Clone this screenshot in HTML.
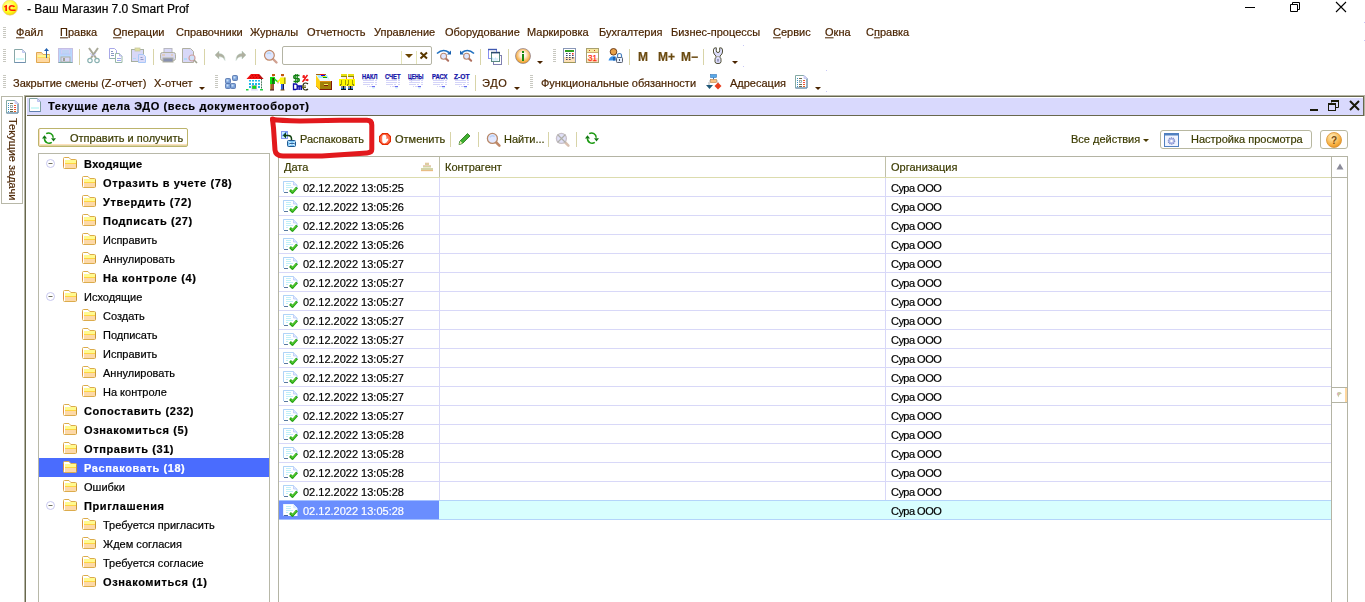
<!DOCTYPE html><html><head><meta charset="utf-8"><style>
*{margin:0;padding:0;box-sizing:border-box}
html,body{width:1365px;height:602px;overflow:hidden;background:#fff;position:relative;font-family:"Liberation Sans",sans-serif}
.a{position:absolute}
.t{position:absolute;height:0;white-space:pre;line-height:0;will-change:transform;-webkit-text-stroke:0.2px currentColor}
.t span{position:absolute;left:0;bottom:0;line-height:normal;display:block;transform:translateY(0.21em)}
svg{position:absolute;overflow:visible}
</style></head><body>
<svg style="left:0;top:0" width="20" height="17" viewBox="0 0 20 17">
<defs><radialGradient id="g1c" cx="0.4" cy="0.35" r="0.7"><stop offset="0" stop-color="#ffffb0"/><stop offset="0.6" stop-color="#ffff20"/><stop offset="1" stop-color="#f0d000"/></radialGradient></defs>
<circle cx="10" cy="7.6" r="7.6" fill="url(#g1c)" stroke="#e8c890" stroke-width="0.6"/>
<path d="M4.2 6.2 L6.2 5 L7 5 L7 11 L5.3 11 L5.3 7 L4.2 7.4 Z" fill="#ff2000"/>
<path d="M15.2 6.6 Q14.6 5 11.8 5 Q8.6 5 8.6 8 Q8.6 11 11.8 11 L15.6 11 L15.6 9.6 L11.8 9.6 Q10.2 9.6 10.2 8 Q10.2 6.4 11.8 6.4 Q13.2 6.4 13.6 7.2 Z" fill="#ff2000"/>
</svg>
<div class="t" style="left:27px;top:13px;font-size:12px;color:#000;font-weight:normal;"><span>- Ваш Магазин 7.0 Smart Prof</span></div>
<div class="a" style="left:1245px;top:7px;width:10px;height:1px;background:#000"></div>
<svg style="left:1288px;top:0" width="16" height="14" viewBox="0 0 16 14"><path d="M2.5 4.5h7v7h-7z M4.5 4.5v-2h7v7h-2" fill="none" stroke="#000" stroke-width="1"/></svg>
<svg style="left:1335px;top:1px" width="12" height="12" viewBox="0 0 12 12"><path d="M1 1L11 11M11 1L1 11" stroke="#000" stroke-width="1.1"/></svg>
<div class="a" style="left:3px;top:27px;width:3px;height:1px;background:#c8c8c0"></div><div class="a" style="left:3px;top:29px;width:3px;height:1px;background:#c8c8c0"></div><div class="a" style="left:3px;top:31px;width:3px;height:1px;background:#c8c8c0"></div><div class="a" style="left:3px;top:33px;width:3px;height:1px;background:#c8c8c0"></div><div class="a" style="left:3px;top:35px;width:3px;height:1px;background:#c8c8c0"></div><div class="a" style="left:3px;top:37px;width:3px;height:1px;background:#c8c8c0"></div>
<div class="t" style="left:16px;top:36px;font-size:11px;color:#4a2400;font-weight:normal;"><span><u>Ф</u>айл</span></div>
<div class="t" style="left:60px;top:36px;font-size:11px;color:#4a2400;font-weight:normal;"><span><u>П</u>равка</span></div>
<div class="t" style="left:113px;top:36px;font-size:11px;color:#4a2400;font-weight:normal;"><span><u>О</u>перации</span></div>
<div class="t" style="left:176px;top:36px;font-size:11px;color:#4a2400;font-weight:normal;"><span>Справочники</span></div>
<div class="t" style="left:250px;top:36px;font-size:11px;color:#4a2400;font-weight:normal;"><span>Журналы</span></div>
<div class="t" style="left:307px;top:36px;font-size:11px;color:#4a2400;font-weight:normal;"><span>Отчетность</span></div>
<div class="t" style="left:374px;top:36px;font-size:11px;color:#4a2400;font-weight:normal;"><span>Управление</span></div>
<div class="t" style="left:445px;top:36px;font-size:11px;color:#4a2400;font-weight:normal;"><span>Оборудование</span></div>
<div class="t" style="left:527px;top:36px;font-size:11px;color:#4a2400;font-weight:normal;"><span>Маркировка</span></div>
<div class="t" style="left:599px;top:36px;font-size:11px;color:#4a2400;font-weight:normal;"><span>Бухгалтерия</span></div>
<div class="t" style="left:671px;top:36px;font-size:11px;color:#4a2400;font-weight:normal;"><span>Бизнес-процессы</span></div>
<div class="t" style="left:773px;top:36px;font-size:11px;color:#4a2400;font-weight:normal;"><span><u>С</u>ервис</span></div>
<div class="t" style="left:825px;top:36px;font-size:11px;color:#4a2400;font-weight:normal;"><span><u>О</u>кна</span></div>
<div class="t" style="left:866px;top:36px;font-size:11px;color:#4a2400;font-weight:normal;"><span>С<u>п</u>равка</span></div>
<div class="a" style="left:3px;top:49px;width:3px;height:1px;background:#c8c8c0"></div><div class="a" style="left:3px;top:51px;width:3px;height:1px;background:#c8c8c0"></div><div class="a" style="left:3px;top:53px;width:3px;height:1px;background:#c8c8c0"></div><div class="a" style="left:3px;top:55px;width:3px;height:1px;background:#c8c8c0"></div><div class="a" style="left:3px;top:57px;width:3px;height:1px;background:#c8c8c0"></div><div class="a" style="left:3px;top:59px;width:3px;height:1px;background:#c8c8c0"></div><div class="a" style="left:3px;top:61px;width:3px;height:1px;background:#c8c8c0"></div>
<svg style="left:13px;top:48px" width="16" height="16" viewBox="0 0 16 16"><path d="M1.5 1.5h8l3 3v10h-11z" fill="#fff" stroke="#88a8a8"/><path d="M1.5 14.5h11" stroke="#7090b0"/><path d="M9.5 1.5v3h3" fill="#d8d8f8" stroke="#c0c8f0"/><rect x="3" y="10" width="8" height="2" fill="#d0f8f8"/></svg>
<svg style="left:36px;top:47px" width="16" height="17" viewBox="0 0 16 17"><path d="M0.5 5.5h5l1.5 2h6.5v8h-13z" fill="#ffd8a0" stroke="#e0a850"/><rect x="1.5" y="8" width="12" height="3" fill="#fff890"/><rect x="1.5" y="10" width="12" height="1" fill="#ffd860"/><path d="M10.5 11V2" stroke="#3060a0" stroke-width="1"/><path d="M8 4l2.5-3 2.5 3z" fill="#2060b0"/></svg>
<svg style="left:58px;top:48px" width="16" height="16" viewBox="0 0 16 16"><rect x="0.5" y="0.5" width="14" height="14" fill="#b8d8ff" stroke="#c8c0e0"/><rect x="3" y="1" width="9" height="5" fill="#d8d8f8" stroke="#c0b8f0" stroke-width="0.6"/><path d="M4 3h7M4 5h7" stroke="#a8d0f0"/><rect x="3" y="9" width="9" height="5" fill="#d8d8f8" stroke="#b0b0a0"/><rect x="5" y="10" width="2" height="3" fill="#a0a090"/><path d="M0.5 14.5h14" stroke="#80a8a0"/></svg>
<div class="a" style="left:79px;top:49px;width:1px;height:16px;background:#d8d4a8"></div>
<svg style="left:87px;top:47px" width="13" height="17" viewBox="0 0 13 17"><path d="M2 1l7 10M11 1L4 11" stroke="#a8a898" stroke-width="2"/><path d="M3 6l2.5 3M9 6L6.5 9" stroke="#c8c8f8" stroke-width="1"/><circle cx="3" cy="13.5" r="2.2" fill="none" stroke="#88b0b0" stroke-width="1.2"/><circle cx="10" cy="13.5" r="2.2" fill="none" stroke="#88b0b0" stroke-width="1.2"/></svg>
<svg style="left:108px;top:48px" width="16" height="16" viewBox="0 0 16 16"><path d="M1.5 0.5h5l2 2v8h-7z" fill="#fff" stroke="#a8a8e8"/><path d="M1.5 10.5h7" stroke="#90b0a8"/><path d="M3 3.5h2M3 5.5h3M3 7.5h3" stroke="#8898c0"/><path d="M7.5 5.5h4l2.5 2.5v6.5h-6.5z" fill="#fff" stroke="#98b8a8"/><path d="M11.5 5.5v2.5h2.5" fill="#e0e0ff" stroke="#a8a8e8" stroke-width="0.8"/><path d="M9 10.5h4M9 12.5h4" stroke="#a0a8f0"/></svg>
<svg style="left:131px;top:47px" width="17" height="17" viewBox="0 0 17 17"><rect x="0.5" y="2.5" width="12" height="12" fill="#d8d8f8" stroke="#a8b0a0"/><rect x="4" y="1" width="5" height="3" fill="#e0e0a0" stroke="#c8c8a0" stroke-width="0.8"/><path d="M7.5 7.5h5l2 2v6h-7z" fill="#dcdcf8" stroke="#a8c8f8"/><rect x="2" y="11" width="3" height="1" fill="#b0d8f8"/><path d="M9.5 12.5h3M9.5 10.5h2" stroke="#9098c8"/></svg>
<div class="a" style="left:153px;top:49px;width:1px;height:16px;background:#d8d4a8"></div>
<svg style="left:160px;top:48px" width="16" height="16" viewBox="0 0 16 16"><rect x="4" y="0.5" width="8" height="5" fill="#d8d8f8" stroke="#b8b8c0"/><rect x="0.5" y="4.5" width="15" height="8" rx="2" fill="#d8d8f0" stroke="#b0b0a0"/><rect x="3" y="10" width="10" height="4" fill="#8890b0" stroke="#b0b0a0"/><path d="M2 7h3M11 7h2" stroke="#e8c090"/></svg>
<svg style="left:182px;top:48px" width="16" height="16" viewBox="0 0 16 16"><path d="M0.5 0.5h8l3 3v11h-11z" fill="#d8d8f8" stroke="#b0b0a0"/><rect x="2" y="10" width="3" height="2" fill="#b0d8f8"/><circle cx="10" cy="10" r="3" fill="#d0e0f8" stroke="#d0a0a0" stroke-width="1.2"/><path d="M12 12l3 3" stroke="#a0a090" stroke-width="1.6"/></svg>
<div class="a" style="left:204px;top:49px;width:1px;height:16px;background:#d8d4a8"></div>
<svg style="left:214px;top:50px" width="12" height="11" viewBox="0 0 12 11"><path d="M1 5L5 1v2.5q6 0 6 7q-1.5-4-6-4V9z" fill="#b0b0a0" stroke="#a8c8b8" stroke-width="0.4"/></svg>
<svg style="left:235px;top:50px" width="12" height="11" viewBox="0 0 12 11"><path d="M11 5L7 1v2.5q-6 0-6 7q1.5-4 6-4V9z" fill="#b0b0a0" stroke="#a8c8b8" stroke-width="0.4"/></svg>
<div class="a" style="left:255px;top:49px;width:1px;height:16px;background:#d8d4a8"></div>
<svg style="left:263px;top:49px" width="16" height="16" viewBox="0 0 16 16"><path d="M9.5 9.5l4 4" stroke="#d0a090" stroke-width="2.4" stroke-linecap="round"/><circle cx="6.4" cy="6.3" r="4.9" fill="#dfe6ff" stroke="#c08868" stroke-width="1.2"/><path d="M4 5q2-2 4 0" stroke="#b8d8f8" stroke-width="1.5" fill="none"/></svg>
<div class="a" style="left:282px;top:46px;width:150px;height:19px;border:1px solid #b4b4a4;border-radius:2px;background:#fff"></div>
<div class="a" style="left:401px;top:51px;width:1px;height:13px;background:#e4e4b8"></div>
<div class="a" style="left:416px;top:51px;width:1px;height:13px;background:#e4e4b8"></div>
<svg style="left:405px;top:54px" width="8" height="4" viewBox="0 0 8 4"><path d="M0 0h8l-4 4z" fill="#6a4400"/></svg>
<svg style="left:419px;top:51px" width="10" height="9" viewBox="0 0 10 9"><path d="M1.5 1.5l6.5 6M8 1.5l-6.5 6" stroke="#5a3800" stroke-width="2"/></svg>
<svg style="left:436px;top:48px" width="16" height="16" viewBox="0 0 16 16"><path d="M1 5.5Q7 0 13 4.5" stroke="#2070c0" stroke-width="1.6" fill="none"/><path d="M15 2.5v4h-4z" fill="#1860b0"/><path d="M9.6 10.2l2.6 2.6" stroke="#b07060" stroke-width="2" stroke-linecap="round"/><circle cx="7.6" cy="8.2" r="3" fill="#dfe6ff" stroke="#b88870" stroke-width="1.1"/></svg>
<svg style="left:459px;top:48px" width="16" height="16" viewBox="0 0 16 16"><g transform="translate(16,0) scale(-1,1)"><path d="M1 5.5Q7 0 13 4.5" stroke="#2070c0" stroke-width="1.6" fill="none"/><path d="M15 2.5v4h-4z" fill="#1860b0"/></g><path d="M9.6 10.2l2.6 2.6" stroke="#b07060" stroke-width="2" stroke-linecap="round"/><circle cx="7.6" cy="8.2" r="3" fill="#dfe6ff" stroke="#b88870" stroke-width="1.1"/></svg>
<div class="a" style="left:480px;top:49px;width:1px;height:16px;background:#d8d4a8"></div>
<svg style="left:487px;top:48px" width="16" height="16" viewBox="0 0 16 16"><rect x="1.5" y="1.5" width="8" height="9" fill="#fff" stroke="#8890f0"/><path d="M1 1.5h9" stroke="#4058b0" stroke-width="1.4"/><rect x="6.5" y="7.5" width="8" height="9" fill="#fff" stroke="#8080b0"/><rect x="4.5" y="4.5" width="8" height="9" fill="#fff" stroke="#5a8a80"/><path d="M4 4.6h9" stroke="#2a4a70" stroke-width="1.6"/><path d="M5.5 9.5v2M7 10v1.5M8.5 9.5v2M10 10v1.5M5 12h6" stroke="#b8e0f8" stroke-width="0.8"/></svg>
<div class="a" style="left:508px;top:49px;width:1px;height:16px;background:#d8d4a8"></div>
<svg style="left:515px;top:48px" width="16" height="16" viewBox="0 0 16 16"><defs><radialGradient id="gi" cx="0.5" cy="0.42" r="0.55"><stop offset="0" stop-color="#ffffff"/><stop offset="0.35" stop-color="#fff0e0"/><stop offset="0.7" stop-color="#f8c070"/><stop offset="1" stop-color="#f0a020"/></radialGradient></defs><circle cx="8" cy="8" r="7.5" fill="url(#gi)" stroke="#8a7a8a" stroke-width="0.7"/><rect x="7" y="6" width="2" height="7" fill="#1a8a10"/><rect x="7" y="3" width="2" height="2" fill="#1a8a10"/></svg>
<svg style="left:537px;top:61px" width="6" height="3" viewBox="0 0 6 3"><path d="M0 0h6l-3 3z" fill="#4a2400"/></svg>
<div class="a" style="left:553px;top:49px;width:3px;height:1px;background:#c8c8c0"></div><div class="a" style="left:553px;top:51px;width:3px;height:1px;background:#c8c8c0"></div><div class="a" style="left:553px;top:53px;width:3px;height:1px;background:#c8c8c0"></div><div class="a" style="left:553px;top:55px;width:3px;height:1px;background:#c8c8c0"></div><div class="a" style="left:553px;top:57px;width:3px;height:1px;background:#c8c8c0"></div><div class="a" style="left:553px;top:59px;width:3px;height:1px;background:#c8c8c0"></div><div class="a" style="left:553px;top:61px;width:3px;height:1px;background:#c8c8c0"></div>
<svg style="left:563px;top:48px" width="14" height="16" viewBox="0 0 14 16"><rect x="0.5" y="0.5" width="12" height="14" fill="#fff" stroke="#8a98b8"/><rect x="1" y="9" width="11" height="5" fill="#fde0b8"/><path d="M0.5 14.5h12" stroke="#a09858"/><rect x="2" y="2" width="9" height="2" fill="#30a020"/><g fill="#404868"><rect x="3" y="5" width="1.6" height="1"/><rect x="6" y="5" width="1.6" height="1"/><rect x="3" y="7" width="1.6" height="1"/><rect x="6" y="7" width="1.6" height="1"/><rect x="9" y="7" width="1.6" height="1"/><rect x="3" y="9" width="1.6" height="1"/><rect x="6" y="9" width="1.6" height="1"/><rect x="9" y="9" width="1.6" height="1.5"/><rect x="3" y="11" width="1.6" height="1"/><rect x="6" y="11" width="1.6" height="1"/></g><rect x="9" y="5" width="1.6" height="1.5" fill="#f03020"/></svg>
<svg style="left:586px;top:48px" width="14" height="16" viewBox="0 0 14 16"><rect x="0.5" y="0.5" width="12" height="14" fill="#fff" stroke="#a8a070"/><rect x="1" y="1" width="11" height="3" fill="#f8e8a0"/><path d="M1 4.5h11" stroke="#c8b070"/><g fill="#c04020"><rect x="3" y="2" width="1" height="1"/><rect x="8" y="2" width="1" height="1"/></g><rect x="1" y="10" width="11" height="4" fill="#fde0c0"/><text x="2" y="13.3" font-family="Liberation Sans" font-size="9.5" fill="#ff3010" stroke="#ff3010" stroke-width="0.25" textLength="9" lengthAdjust="spacingAndGlyphs">31</text></svg>
<svg style="left:608px;top:48px" width="17" height="16" viewBox="0 0 17 16"><circle cx="5.5" cy="3.8" r="3.3" fill="#e8a048" stroke="#603010" stroke-width="0.9"/><path d="M0.5 12.5Q1.5 8.5 5 8.3L7.5 8.3V12.5z" fill="#3a90e8"/><rect x="5" y="9" width="2.5" height="3.5" fill="#1a60b0"/><rect x="8.5" y="9.5" width="6" height="5" rx="0.8" fill="#e8f0ff" stroke="#5a6070"/><path d="M9.5 9.5V7.5q0-2 2-2t2 2v2" fill="none" stroke="#4a80c0" stroke-width="1.2"/><rect x="11" y="11" width="1" height="2" fill="#4a6070"/></svg>
<div class="a" style="left:629px;top:49px;width:1px;height:16px;background:#d8d4a8"></div>
<div class="t" style="left:638px;top:61px;font-size:12px;color:#6a4a10;font-weight:bold;"><span>M</span></div>
<div class="t" style="left:658px;top:61px;font-size:12px;color:#6a4a10;font-weight:bold;"><span>M+</span></div>
<div class="t" style="left:681px;top:61px;font-size:12px;color:#6a4a10;font-weight:bold;"><span>M−</span></div>
<div class="a" style="left:703px;top:49px;width:1px;height:16px;background:#d8d4a8"></div>
<svg style="left:712px;top:47px" width="12" height="18" viewBox="0 0 12 18"><path d="M1.5 3Q1.5 0.8 3.5 0.8H4.3V3.5Q4.3 5.6 6 5.6Q7.7 5.6 7.7 3.5V0.8H8.5Q10.5 0.8 10.5 3V5Q10.5 7 8 9V10.3Q9 11 9 12.5V14.8Q9 16.6 6 16.6Q3 16.6 3 14.8V12.5Q3 11 4 10.3V9Q1.5 7 1.5 5Z" fill="#dcdcfa" stroke="#3e3e20" stroke-width="0.9"/><path d="M2.5 2.5v2.5" stroke="#fff" stroke-width="1"/><rect x="5.3" y="12" width="1.4" height="2.6" fill="#8080a8"/><rect x="5.3" y="9" width="1.4" height="1" fill="#a0a080"/></svg>
<div class="a" style="left:743px;top:45px;width:1px;height:1px;background:#c8c8f8"></div>
<div class="a" style="left:743px;top:66px;width:1px;height:1px;background:#c8c8f8"></div>
<div class="a" style="left:1364px;top:22px;width:1px;height:1px;background:#c8c8f8"></div>
<div class="a" style="left:1364px;top:40px;width:1px;height:1px;background:#c8c8f8"></div>
<svg style="left:732px;top:61px" width="6" height="3" viewBox="0 0 6 3"><path d="M0 0h6l-3 3z" fill="#4a2400"/></svg>
<div class="a" style="left:3px;top:75px;width:3px;height:1px;background:#c8c8c0"></div><div class="a" style="left:3px;top:77px;width:3px;height:1px;background:#c8c8c0"></div><div class="a" style="left:3px;top:79px;width:3px;height:1px;background:#c8c8c0"></div><div class="a" style="left:3px;top:81px;width:3px;height:1px;background:#c8c8c0"></div><div class="a" style="left:3px;top:83px;width:3px;height:1px;background:#c8c8c0"></div><div class="a" style="left:3px;top:85px;width:3px;height:1px;background:#c8c8c0"></div><div class="a" style="left:3px;top:87px;width:3px;height:1px;background:#c8c8c0"></div>
<div class="t" style="left:13px;top:87px;font-size:11px;color:#4a2400;font-weight:normal;"><span>Закрытие смены (Z-отчет)</span></div>
<div class="t" style="left:154px;top:87px;font-size:11px;color:#4a2400;font-weight:normal;"><span>X-отчет</span></div>
<svg style="left:199px;top:87px" width="6" height="3" viewBox="0 0 6 3"><path d="M0 0h6l-3 3z" fill="#4a2400"/></svg>
<div class="a" style="left:215px;top:75px;width:3px;height:1px;background:#c8c8c0"></div><div class="a" style="left:215px;top:77px;width:3px;height:1px;background:#c8c8c0"></div><div class="a" style="left:215px;top:79px;width:3px;height:1px;background:#c8c8c0"></div><div class="a" style="left:215px;top:81px;width:3px;height:1px;background:#c8c8c0"></div><div class="a" style="left:215px;top:83px;width:3px;height:1px;background:#c8c8c0"></div><div class="a" style="left:215px;top:85px;width:3px;height:1px;background:#c8c8c0"></div><div class="a" style="left:215px;top:87px;width:3px;height:1px;background:#c8c8c0"></div>
<svg style="left:225px;top:75px" width="14" height="15" viewBox="0 0 14 15"><g fill="#7aa0d8" stroke="#4f6fa8" stroke-width="0.8"><rect x="0.5" y="3.5" width="5" height="5" rx="1"/><rect x="0.5" y="8.5" width="5" height="5" rx="1"/><rect x="5.5" y="8.5" width="5" height="5" rx="1"/><rect x="7.5" y="0.5" width="5" height="5" rx="1"/></g><g fill="#c8e0f8"><rect x="1.5" y="4.5" width="2" height="2"/><rect x="1.5" y="9.5" width="2" height="2"/><rect x="6.5" y="9.5" width="2" height="2"/><rect x="8.5" y="1.5" width="2" height="2"/></g></svg>
<svg style="left:246px;top:73px" width="18" height="18" viewBox="0 0 18 18"><path d="M5 1h8l4.5 5H0.5z" fill="#f01010"/><path d="M13 1l4.5 5H14z" fill="#901010" opacity="0.6"/><g fill="#900000" opacity="0.55"><rect x="6" y="2" width="1" height="1"/><rect x="9" y="2" width="1" height="1"/><rect x="12" y="2" width="1" height="1"/><rect x="4" y="4" width="1" height="1"/><rect x="7" y="4" width="1" height="1"/><rect x="10" y="4" width="1" height="1"/><rect x="13" y="4" width="1" height="1"/></g><rect x="2" y="6" width="13" height="10" fill="#fff"/><g fill="#20b8e8"><rect x="3" y="7" width="2" height="1.5"/><rect x="6" y="7" width="2" height="1.5"/><rect x="9" y="7" width="2" height="1.5"/><rect x="12" y="7" width="2" height="1.5"/><rect x="3" y="10" width="2" height="2"/><rect x="6" y="10" width="2" height="2"/><rect x="9" y="10" width="2" height="2"/><rect x="12" y="10" width="2" height="2"/><rect x="3" y="13" width="2" height="2"/><rect x="12" y="13" width="2" height="2"/></g><rect x="6" y="12.5" width="4.5" height="3.5" fill="#10e010" stroke="#a090c0" stroke-width="0.6"/><path d="M15.5 6v10" stroke="#306848" stroke-width="1" stroke-dasharray="1 0.6"/><rect x="0" y="16" width="2.5" height="1.5" fill="#20d040"/><rect x="14" y="16" width="3" height="1.5" fill="#20d040"/><rect x="5" y="16.5" width="7" height="1" fill="#d8d8f8"/></svg>
<svg style="left:269px;top:73px" width="18" height="18" viewBox="0 0 18 18"><rect x="3" y="1" width="3" height="2" fill="#c05810"/><rect x="3" y="3" width="2" height="1.5" fill="#f8c8d0"/><rect x="1" y="4" width="5" height="7" fill="#10e010"/><rect x="3" y="5" width="2.5" height="6" fill="#108010"/><rect x="4" y="5" width="1" height="2.5" fill="#402010"/><path d="M5.5 6l4 3.5" stroke="#10e010" stroke-width="1.5"/><rect x="1.3" y="11" width="2" height="6" fill="#a07010"/><rect x="3.3" y="11" width="1.5" height="6" fill="#902010"/><rect x="1" y="16.5" width="4" height="1" fill="#401010"/><rect x="12" y="1" width="3" height="2" fill="#c05810"/><rect x="12.5" y="3" width="2" height="1.5" fill="#f8c8d0"/><rect x="11" y="4.5" width="5.5" height="6.5" fill="#fff810"/><rect x="15" y="4.5" width="1.5" height="6.5" fill="#a8a010"/><path d="M11.5 6l-3 3.5" stroke="#fff810" stroke-width="1.5"/><rect x="8" y="9.5" width="2" height="1" fill="#f8b0c0"/><rect x="12" y="11" width="1.5" height="6" fill="#2060f0"/><rect x="13.5" y="11" width="1.5" height="6" fill="#101860"/><rect x="11.5" y="16.5" width="4" height="1" fill="#805010"/></svg>
<svg style="left:293px;top:74px" width="16" height="16" viewBox="0 0 16 16"><path d="M6.5 1.5H2Q0.8 1.5 0.8 3Q0.8 4.5 2.2 4.5H4.8Q6.2 4.5 6.2 6Q6.2 7.5 5 7.5H0.5" stroke="#108010" stroke-width="1.6" fill="none"/><path d="M2.7 0v9M4.3 0v9" stroke="#108010" stroke-width="1"/><path d="M9.5 8l5-7" stroke="#f01010" stroke-width="1.4"/><path d="M9.6 2.2l1.4-1 1 1-1 1z M13 6l1.4-1 1 1-1 1z" fill="#f01010" stroke="#f01010" stroke-width="0.8"/><path d="M9.5 3.5h3M11 6h4" stroke="#f01010" stroke-width="0.9"/><path d="M0.5 10h2.2q1.5 0 1.5 1.5v2.5q0 1.5-1.5 1.5H0.5z" fill="none" stroke="#0a0aa8" stroke-width="1.3"/><path d="M5 16v-4h3.5v4M6.8 12v4" stroke="#0a0aa8" stroke-width="1.3" fill="none"/><path d="M15 10q-1-1-2.5-1Q10 9 10 12.5Q10 16 12.5 16q1.5 0 2.5-1" stroke="#282810" stroke-width="1.2" fill="none"/><path d="M9 12h4M9 13.5h4" stroke="#6a6a20" stroke-width="1"/></svg>
<svg style="left:316px;top:74px" width="17" height="17" viewBox="0 0 17 17"><path d="M0 0h10v1H0z" fill="#a06010"/><path d="M1 1h10l3 6H4z" fill="#a8e8ff"/><path d="M3 4h9l2 3H4z" fill="#f0faff"/><rect x="4" y="0" width="4" height="1" fill="#f01010"/><rect x="5" y="1" width="4" height="1" fill="#1010f0"/><rect x="6" y="2" width="4" height="1" fill="#f0f010"/><rect x="7" y="3" width="4" height="1" fill="#10a010"/><path d="M0 1v11l4 4V7z" fill="#ffd010"/><path d="M0 12l4 4" stroke="#d89010" stroke-width="0.8"/><rect x="4" y="7" width="12" height="9" fill="#a08008"/><path d="M4 7.5h12" stroke="#e09010"/><path d="M15.5 7v9M4 15.5h12" stroke="#801808"/><rect x="8" y="10" width="4" height="1" fill="#f8f060"/><rect x="8" y="11" width="4" height="1" fill="#801808"/></svg>
<svg style="left:339px;top:74px" width="18" height="17" viewBox="0 0 18 17"><rect x="2" y="0" width="6" height="3" fill="#e8e010"/><rect x="2" y="2" width="6" height="1" fill="#8a8a10"/><rect x="2.5" y="3" width="5" height="2" fill="#f8f0e8"/><rect x="7" y="3" width="1" height="2" fill="#f08010"/><rect x="0" y="5" width="9" height="7" fill="#fff800"/><path d="M2.5 6v5M6.5 6v5" stroke="#8a8a00" stroke-width="0.8"/><rect x="1" y="10.5" width="1" height="1" fill="#202010"/><rect x="7" y="10.5" width="1" height="1" fill="#202010"/><rect x="2" y="12" width="2" height="3" fill="#8888a0"/><rect x="5" y="12" width="2" height="3" fill="#8888a0"/><rect x="4" y="12" width="1" height="3" fill="#101010"/><rect x="2" y="14" width="2" height="1" fill="#2080d0"/><rect x="5" y="14" width="2" height="1" fill="#2080d0"/><rect x="2" y="15" width="5" height="1" fill="#101010"/><g transform="translate(7,0)"><rect x="2" y="0" width="6" height="3" fill="#e8e010"/><rect x="2" y="2" width="6" height="1" fill="#8a8a10"/><rect x="2.5" y="3" width="5" height="2" fill="#f8f0e8"/><rect x="7" y="3" width="1" height="2" fill="#f08010"/><rect x="0" y="5" width="9" height="7" fill="#fff800"/><path d="M2.5 6v5M6.5 6v5" stroke="#8a8a00" stroke-width="0.8"/><rect x="1" y="10.5" width="1" height="1" fill="#202010"/><rect x="7" y="10.5" width="1" height="1" fill="#202010"/><rect x="2" y="12" width="2" height="3" fill="#8888a0"/><rect x="5" y="12" width="2" height="3" fill="#8888a0"/><rect x="4" y="12" width="1" height="3" fill="#101010"/><rect x="2" y="14" width="2" height="1" fill="#2080d0"/><rect x="5" y="14" width="2" height="1" fill="#2080d0"/><rect x="2" y="15" width="5" height="1" fill="#101010"/></g></svg>
<svg style="left:362px;top:74px" width="16" height="16" viewBox="0 0 16 16"><text x="0" y="5" font-family="Liberation Sans" font-size="7" font-weight="bold" fill="#1414a8" stroke="#1414a8" stroke-width="0.25" textLength="15.5" lengthAdjust="spacingAndGlyphs">НАКЛ</text><path d="M1 6.5h11M13 6.5h2M1 8.5h11M13 8.5h2M1 10.5h7M9 10.5h2M13 10.5h2M5 12.5h1M7 12.5h3" stroke="#d4d4f8" stroke-width="1"/><rect x="10" y="12" width="3" height="1.2" fill="#6a6af0"/><rect x="10.5" y="13.5" width="2" height="1" fill="#b8f0f8"/></svg>
<svg style="left:385px;top:74px" width="16" height="16" viewBox="0 0 16 16"><text x="0" y="5" font-family="Liberation Sans" font-size="7" font-weight="bold" fill="#1414a8" stroke="#1414a8" stroke-width="0.25" textLength="15.5" lengthAdjust="spacingAndGlyphs">СЧЕТ</text><path d="M1 6.5h11M13 6.5h2M1 8.5h11M13 8.5h2M1 10.5h7M9 10.5h2M13 10.5h2M5 12.5h1M7 12.5h3" stroke="#d4d4f8" stroke-width="1"/><rect x="10" y="12" width="3" height="1.2" fill="#6a6af0"/><rect x="10.5" y="13.5" width="2" height="1" fill="#b8f0f8"/></svg>
<svg style="left:408px;top:74px" width="16" height="16" viewBox="0 0 16 16"><text x="0" y="5" font-family="Liberation Sans" font-size="7" font-weight="bold" fill="#1414a8" stroke="#1414a8" stroke-width="0.25" textLength="15.5" lengthAdjust="spacingAndGlyphs">ЦЕНЫ</text><path d="M1 6.5h11M13 6.5h2M1 8.5h11M13 8.5h2M1 10.5h7M9 10.5h2M13 10.5h2M5 12.5h1M7 12.5h3" stroke="#d4d4f8" stroke-width="1"/><rect x="10" y="12" width="3" height="1.2" fill="#6a6af0"/><rect x="10.5" y="13.5" width="2" height="1" fill="#b8f0f8"/></svg>
<svg style="left:432px;top:74px" width="16" height="16" viewBox="0 0 16 16"><text x="0" y="5" font-family="Liberation Sans" font-size="7" font-weight="bold" fill="#1414a8" stroke="#1414a8" stroke-width="0.25" textLength="15.5" lengthAdjust="spacingAndGlyphs">РАСХ</text><path d="M1 6.5h11M13 6.5h2M1 8.5h11M13 8.5h2M1 10.5h7M9 10.5h2M13 10.5h2M5 12.5h1M7 12.5h3" stroke="#d4d4f8" stroke-width="1"/><rect x="10" y="12" width="3" height="1.2" fill="#6a6af0"/><rect x="10.5" y="13.5" width="2" height="1" fill="#b8f0f8"/></svg>
<svg style="left:454px;top:74px" width="16" height="16" viewBox="0 0 16 16"><text x="0" y="5" font-family="Liberation Sans" font-size="7" font-weight="bold" fill="#1414a8" stroke="#1414a8" stroke-width="0.25" textLength="15.5" lengthAdjust="spacingAndGlyphs">Z-ОТ</text><path d="M1 6.5h11M13 6.5h2M1 8.5h11M13 8.5h2M1 10.5h7M9 10.5h2M13 10.5h2M5 12.5h1M7 12.5h3" stroke="#d4d4f8" stroke-width="1"/><rect x="10" y="12" width="3" height="1.2" fill="#6a6af0"/><rect x="10.5" y="13.5" width="2" height="1" fill="#b8f0f8"/></svg>
<div class="a" style="left:475px;top:75px;width:1px;height:16px;background:#d8d4a8"></div>
<div class="t" style="left:482px;top:87px;font-size:11px;color:#4a2400;font-weight:normal;letter-spacing:0.6px;"><span>ЭДО</span></div>
<svg style="left:514px;top:87px" width="6" height="3" viewBox="0 0 6 3"><path d="M0 0h6l-3 3z" fill="#4a2400"/></svg>
<div class="a" style="left:530px;top:75px;width:3px;height:1px;background:#c8c8c0"></div><div class="a" style="left:530px;top:77px;width:3px;height:1px;background:#c8c8c0"></div><div class="a" style="left:530px;top:79px;width:3px;height:1px;background:#c8c8c0"></div><div class="a" style="left:530px;top:81px;width:3px;height:1px;background:#c8c8c0"></div><div class="a" style="left:530px;top:83px;width:3px;height:1px;background:#c8c8c0"></div><div class="a" style="left:530px;top:85px;width:3px;height:1px;background:#c8c8c0"></div><div class="a" style="left:530px;top:87px;width:3px;height:1px;background:#c8c8c0"></div>
<div class="t" style="left:541px;top:87px;font-size:11px;color:#4a2400;font-weight:normal;"><span>Функциональные обязанности</span></div>
<svg style="left:706px;top:74px" width="16" height="16" viewBox="0 0 16 16"><rect x="4.5" y="0.5" width="6" height="3" fill="#58a8e8" stroke="#3878b8" stroke-width="0.6"/><path d="M7.5 3.5v2" stroke="#3878b8"/><rect x="4.5" y="5.5" width="6" height="3" fill="#f8c080" stroke="#c08040" stroke-width="0.6"/><path d="M3 8v3M12 8v3M4.5 7H3M10.5 7H12" stroke="#a0a0a0" stroke-width="0.8"/><path d="M0 11h7l-3.5 4z" fill="#205878"/><path d="M12 8.5l3.5 3.5-3.5 3.5-3.5-3.5z" fill="#e84020"/></svg>
<div class="t" style="left:730px;top:87px;font-size:11px;color:#4a2400;font-weight:normal;"><span>Адресация</span></div>
<svg style="left:795px;top:75px" width="13" height="14" viewBox="0 0 13 14"><path d="M0.5 0.5h8.5l3 3v9.5h-11.5z" fill="#fff" stroke="#84aaa4"/><path d="M12 3.5v9.5h-11.5" fill="none" stroke="#6a8ab2"/><path d="M9 0.5v3h3z" fill="#d8d8fa" stroke="#c4c4f4" stroke-width="0.8"/><g><rect x="2" y="3" width="1" height="1" fill="#3a92c2"/><rect x="4" y="3" width="3" height="1" fill="#6e6a4e"/><rect x="2" y="5" width="1" height="1" fill="#3a92c2"/><rect x="8" y="5" width="2" height="1" fill="#ea5a20"/><rect x="2" y="7" width="1" height="1" fill="#3a92c2"/><rect x="8" y="7" width="2" height="1" fill="#e84a50"/><rect x="2" y="9" width="1" height="1" fill="#3a92c2"/><rect x="4" y="9" width="3" height="1" fill="#6e6a4e"/><rect x="8" y="9" width="2" height="1" fill="#ea5a20"/><rect x="2" y="11" width="1" height="1" fill="#3a92c2"/><rect x="4" y="11" width="3" height="1" fill="#6e6a4e"/><rect x="8" y="11" width="2" height="1" fill="#ea5a20"/><rect x="4.5" y="5.5" width="2" height="2" fill="#fff" stroke="#8aa0a0" stroke-width="0.8"/></g></svg>
<svg style="left:815px;top:87px" width="6" height="3" viewBox="0 0 6 3"><path d="M0 0h6l-3 3z" fill="#4a2400"/></svg>
<div class="a" style="left:826px;top:70px;width:1px;height:1px;background:#c8c8f8"></div>
<div class="a" style="left:826px;top:91px;width:1px;height:1px;background:#c8c8f8"></div>
<div class="a" style="left:1px;top:96px;width:22px;height:108px;border:1px solid #b8b8a8;background:#fff"></div>
<svg style="left:6px;top:100px" width="13" height="14" viewBox="0 0 13 14"><path d="M0.5 0.5h8.5l3 3v9.5h-11.5z" fill="#fff" stroke="#84aaa4"/><path d="M12 3.5v9.5h-11.5" fill="none" stroke="#6a8ab2"/><path d="M9 0.5v3h3z" fill="#d8d8fa" stroke="#c4c4f4" stroke-width="0.8"/><g><rect x="2" y="3" width="1" height="1" fill="#3a92c2"/><rect x="4" y="3" width="3" height="1" fill="#6e6a4e"/><rect x="2" y="5" width="1" height="1" fill="#3a92c2"/><rect x="8" y="5" width="2" height="1" fill="#ea5a20"/><rect x="2" y="7" width="1" height="1" fill="#3a92c2"/><rect x="8" y="7" width="2" height="1" fill="#e84a50"/><rect x="2" y="9" width="1" height="1" fill="#3a92c2"/><rect x="4" y="9" width="3" height="1" fill="#6e6a4e"/><rect x="8" y="9" width="2" height="1" fill="#ea5a20"/><rect x="2" y="11" width="1" height="1" fill="#3a92c2"/><rect x="4" y="11" width="3" height="1" fill="#6e6a4e"/><rect x="8" y="11" width="2" height="1" fill="#ea5a20"/><rect x="4.5" y="5.5" width="2" height="2" fill="#fff" stroke="#8aa0a0" stroke-width="0.8"/></g></svg>
<div class="a" style="left:18px;top:118px;width:0;height:0;"><div style="position:absolute;left:0;top:0;transform:rotate(90deg);transform-origin:0 0;font-size:11px;color:#4a2400;white-space:pre;line-height:11px;will-change:transform;-webkit-text-stroke:0.2px currentColor">Текущие задачи</div></div>
<div class="a" style="left:24px;top:95px;width:1341px;height:507px;border-left:1px solid #b4b4a4;border-top:1px solid #b4b4a4"></div>
<div class="a" style="left:25px;top:96px;width:1340px;height:506px;border-left:1px solid #68684e;border-top:1px solid #68684e"></div>
<div class="a" style="left:27px;top:98px;width:1336px;height:18px;background:#d9d9fd;border-bottom:1px solid #68684e"></div>
<div class="a" style="left:1363px;top:96px;width:1px;height:20px;background:#68684e"></div>
<div class="a" style="left:1364px;top:95px;width:1px;height:21px;background:#b4b4a4"></div>
<svg style="left:29px;top:98px" width="13" height="14" viewBox="0 0 13 14"><path d="M0.5 0.5h8l3 3v10h-11z" fill="#fff" stroke="#7fa0a0"/><path d="M0.5 13.5h11" stroke="#6080b0"/><path d="M8.5 0.5v3h3" fill="#d8d8f8" stroke="#b0b8f0" stroke-width="0.8"/><rect x="2" y="9" width="8" height="2" fill="#d0f8f8"/></svg>
<div class="t" style="left:48px;top:110px;font-size:11px;color:#000;font-weight:bold;letter-spacing:0.6px;"><span>Текущие дела ЭДО (весь документооборот)</span></div>
<div class="a" style="left:1310px;top:109px;width:8px;height:2px;background:#1a1a0a"></div>
<svg style="left:1327px;top:99px" width="13" height="13" viewBox="0 0 13 13"><path d="M4.5 3.5V1.5h7v7h-2.5" fill="none" stroke="#1a1a0a"/><path d="M4 2h8" stroke="#1a1a0a" stroke-width="2"/><rect x="1.5" y="4.5" width="7" height="7" fill="#d9d9fd" stroke="#1a1a0a"/><path d="M1 5h8" stroke="#1a1a0a" stroke-width="2"/></svg>
<svg style="left:1349px;top:100px" width="11" height="11" viewBox="0 0 11 11"><path d="M1 1l9 9M10 1L1 10" stroke="#1a1a0a" stroke-width="2"/></svg>
<div class="a" style="left:38px;top:128px;width:150px;height:19px;border:1px solid #bcb46c;border-radius:2px;background:#fff;box-shadow:inset 1px 0 0 #fde0bc, inset 0 -1px 0 #dcd4a4, inset 0 -2px 0 #fde0bc"></div>
<svg style="left:41px;top:131px" width="15" height="15" viewBox="0 0 15 15"><path d="M5.2 2.7A4.6 4.6 0 0 1 12.2 6.8" stroke="#1a9a10" stroke-width="1.5" fill="none"/><path d="M10 7.3h5l-2.5 3.2z" fill="#107810"/><path d="M10.8 11.4A4.6 4.6 0 0 1 3.5 7.3" stroke="#1a9a10" stroke-width="1.5" fill="none"/><path d="M1 7.6h5L3.5 4.3z" fill="#107810"/></svg>
<div class="t" style="left:70px;top:142px;font-size:11px;color:#3c3c00;font-weight:normal;"><span>Отправить и получить</span></div>
<div class="a" style="left:38px;top:153px;width:232px;height:460px;border:1px solid #b8b8a8;background:#fff"></div>
<svg style="left:46px;top:159px" width="10" height="10" viewBox="0 0 10 10"><circle cx="4.5" cy="4.5" r="4" fill="#fff" stroke="#c8c8f0"/><path d="M2.5 4.5h4" stroke="#707060" stroke-width="1"/></svg>
<svg style="left:63px;top:157px" width="14" height="12" viewBox="0 0 14 12"><path d="M0.5 10.5V1.5Q0.5 0.5 1.5 0.5H6L7.8 2.5H12.5Q13.5 2.5 13.5 3.5V10.5Q13.5 11.5 12.5 11.5H1.5Q0.5 11.5 0.5 10.5Z" fill="#fff" stroke="#dcac4c"/><rect x="2" y="3" width="11" height="3" fill="#fffa90"/><rect x="2" y="6" width="11" height="1" fill="#ffd440"/><rect x="2" y="7" width="11" height="4" fill="#fdd9a8"/><path d="M13.5 3.5V10.5" stroke="#c8983a"/><path d="M0.5 3v6" stroke="#e08a40" stroke-width="0.8"/></svg>
<div class="t" style="left:84px;top:168px;font-size:11px;color:#000;font-weight:bold;letter-spacing:0.35px;"><span>Входящие</span></div>
<svg style="left:82px;top:176px" width="14" height="12" viewBox="0 0 14 12"><path d="M0.5 10.5V1.5Q0.5 0.5 1.5 0.5H6L7.8 2.5H12.5Q13.5 2.5 13.5 3.5V10.5Q13.5 11.5 12.5 11.5H1.5Q0.5 11.5 0.5 10.5Z" fill="#fff" stroke="#dcac4c"/><rect x="2" y="3" width="11" height="3" fill="#fffa90"/><rect x="2" y="6" width="11" height="1" fill="#ffd440"/><rect x="2" y="7" width="11" height="4" fill="#fdd9a8"/><path d="M13.5 3.5V10.5" stroke="#c8983a"/><path d="M0.5 3v6" stroke="#e08a40" stroke-width="0.8"/></svg>
<div class="t" style="left:103px;top:187px;font-size:11px;color:#000;font-weight:bold;letter-spacing:0.6px;"><span>Отразить в учете (78)</span></div>
<svg style="left:82px;top:195px" width="14" height="12" viewBox="0 0 14 12"><path d="M0.5 10.5V1.5Q0.5 0.5 1.5 0.5H6L7.8 2.5H12.5Q13.5 2.5 13.5 3.5V10.5Q13.5 11.5 12.5 11.5H1.5Q0.5 11.5 0.5 10.5Z" fill="#fff" stroke="#dcac4c"/><rect x="2" y="3" width="11" height="3" fill="#fffa90"/><rect x="2" y="6" width="11" height="1" fill="#ffd440"/><rect x="2" y="7" width="11" height="4" fill="#fdd9a8"/><path d="M13.5 3.5V10.5" stroke="#c8983a"/><path d="M0.5 3v6" stroke="#e08a40" stroke-width="0.8"/></svg>
<div class="t" style="left:103px;top:206px;font-size:11px;color:#000;font-weight:bold;letter-spacing:0.65px;"><span>Утвердить (72)</span></div>
<svg style="left:82px;top:214px" width="14" height="12" viewBox="0 0 14 12"><path d="M0.5 10.5V1.5Q0.5 0.5 1.5 0.5H6L7.8 2.5H12.5Q13.5 2.5 13.5 3.5V10.5Q13.5 11.5 12.5 11.5H1.5Q0.5 11.5 0.5 10.5Z" fill="#fff" stroke="#dcac4c"/><rect x="2" y="3" width="11" height="3" fill="#fffa90"/><rect x="2" y="6" width="11" height="1" fill="#ffd440"/><rect x="2" y="7" width="11" height="4" fill="#fdd9a8"/><path d="M13.5 3.5V10.5" stroke="#c8983a"/><path d="M0.5 3v6" stroke="#e08a40" stroke-width="0.8"/></svg>
<div class="t" style="left:103px;top:225px;font-size:11px;color:#000;font-weight:bold;letter-spacing:0.55px;"><span>Подписать (27)</span></div>
<svg style="left:82px;top:233px" width="14" height="12" viewBox="0 0 14 12"><path d="M0.5 10.5V1.5Q0.5 0.5 1.5 0.5H6L7.8 2.5H12.5Q13.5 2.5 13.5 3.5V10.5Q13.5 11.5 12.5 11.5H1.5Q0.5 11.5 0.5 10.5Z" fill="#fff" stroke="#dcac4c"/><rect x="2" y="3" width="11" height="3" fill="#fffa90"/><rect x="2" y="6" width="11" height="1" fill="#ffd440"/><rect x="2" y="7" width="11" height="4" fill="#fdd9a8"/><path d="M13.5 3.5V10.5" stroke="#c8983a"/><path d="M0.5 3v6" stroke="#e08a40" stroke-width="0.8"/></svg>
<div class="t" style="left:103px;top:244px;font-size:11px;color:#000;font-weight:normal;"><span>Исправить</span></div>
<svg style="left:82px;top:252px" width="14" height="12" viewBox="0 0 14 12"><path d="M0.5 10.5V1.5Q0.5 0.5 1.5 0.5H6L7.8 2.5H12.5Q13.5 2.5 13.5 3.5V10.5Q13.5 11.5 12.5 11.5H1.5Q0.5 11.5 0.5 10.5Z" fill="#fff" stroke="#dcac4c"/><rect x="2" y="3" width="11" height="3" fill="#fffa90"/><rect x="2" y="6" width="11" height="1" fill="#ffd440"/><rect x="2" y="7" width="11" height="4" fill="#fdd9a8"/><path d="M13.5 3.5V10.5" stroke="#c8983a"/><path d="M0.5 3v6" stroke="#e08a40" stroke-width="0.8"/></svg>
<div class="t" style="left:103px;top:263px;font-size:11px;color:#000;font-weight:normal;"><span>Аннулировать</span></div>
<svg style="left:82px;top:271px" width="14" height="12" viewBox="0 0 14 12"><path d="M0.5 10.5V1.5Q0.5 0.5 1.5 0.5H6L7.8 2.5H12.5Q13.5 2.5 13.5 3.5V10.5Q13.5 11.5 12.5 11.5H1.5Q0.5 11.5 0.5 10.5Z" fill="#fff" stroke="#dcac4c"/><rect x="2" y="3" width="11" height="3" fill="#fffa90"/><rect x="2" y="6" width="11" height="1" fill="#ffd440"/><rect x="2" y="7" width="11" height="4" fill="#fdd9a8"/><path d="M13.5 3.5V10.5" stroke="#c8983a"/><path d="M0.5 3v6" stroke="#e08a40" stroke-width="0.8"/></svg>
<div class="t" style="left:103px;top:282px;font-size:11px;color:#000;font-weight:bold;letter-spacing:0.65px;"><span>На контроле (4)</span></div>
<svg style="left:46px;top:292px" width="10" height="10" viewBox="0 0 10 10"><circle cx="4.5" cy="4.5" r="4" fill="#fff" stroke="#c8c8f0"/><path d="M2.5 4.5h4" stroke="#707060" stroke-width="1"/></svg>
<svg style="left:63px;top:290px" width="14" height="12" viewBox="0 0 14 12"><path d="M0.5 10.5V1.5Q0.5 0.5 1.5 0.5H6L7.8 2.5H12.5Q13.5 2.5 13.5 3.5V10.5Q13.5 11.5 12.5 11.5H1.5Q0.5 11.5 0.5 10.5Z" fill="#fff" stroke="#dcac4c"/><rect x="2" y="3" width="11" height="3" fill="#fffa90"/><rect x="2" y="6" width="11" height="1" fill="#ffd440"/><rect x="2" y="7" width="11" height="4" fill="#fdd9a8"/><path d="M13.5 3.5V10.5" stroke="#c8983a"/><path d="M0.5 3v6" stroke="#e08a40" stroke-width="0.8"/></svg>
<div class="t" style="left:84px;top:301px;font-size:11px;color:#000;font-weight:normal;"><span>Исходящие</span></div>
<svg style="left:82px;top:309px" width="14" height="12" viewBox="0 0 14 12"><path d="M0.5 10.5V1.5Q0.5 0.5 1.5 0.5H6L7.8 2.5H12.5Q13.5 2.5 13.5 3.5V10.5Q13.5 11.5 12.5 11.5H1.5Q0.5 11.5 0.5 10.5Z" fill="#fff" stroke="#dcac4c"/><rect x="2" y="3" width="11" height="3" fill="#fffa90"/><rect x="2" y="6" width="11" height="1" fill="#ffd440"/><rect x="2" y="7" width="11" height="4" fill="#fdd9a8"/><path d="M13.5 3.5V10.5" stroke="#c8983a"/><path d="M0.5 3v6" stroke="#e08a40" stroke-width="0.8"/></svg>
<div class="t" style="left:103px;top:320px;font-size:11px;color:#000;font-weight:normal;"><span>Создать</span></div>
<svg style="left:82px;top:328px" width="14" height="12" viewBox="0 0 14 12"><path d="M0.5 10.5V1.5Q0.5 0.5 1.5 0.5H6L7.8 2.5H12.5Q13.5 2.5 13.5 3.5V10.5Q13.5 11.5 12.5 11.5H1.5Q0.5 11.5 0.5 10.5Z" fill="#fff" stroke="#dcac4c"/><rect x="2" y="3" width="11" height="3" fill="#fffa90"/><rect x="2" y="6" width="11" height="1" fill="#ffd440"/><rect x="2" y="7" width="11" height="4" fill="#fdd9a8"/><path d="M13.5 3.5V10.5" stroke="#c8983a"/><path d="M0.5 3v6" stroke="#e08a40" stroke-width="0.8"/></svg>
<div class="t" style="left:103px;top:339px;font-size:11px;color:#000;font-weight:normal;"><span>Подписать</span></div>
<svg style="left:82px;top:347px" width="14" height="12" viewBox="0 0 14 12"><path d="M0.5 10.5V1.5Q0.5 0.5 1.5 0.5H6L7.8 2.5H12.5Q13.5 2.5 13.5 3.5V10.5Q13.5 11.5 12.5 11.5H1.5Q0.5 11.5 0.5 10.5Z" fill="#fff" stroke="#dcac4c"/><rect x="2" y="3" width="11" height="3" fill="#fffa90"/><rect x="2" y="6" width="11" height="1" fill="#ffd440"/><rect x="2" y="7" width="11" height="4" fill="#fdd9a8"/><path d="M13.5 3.5V10.5" stroke="#c8983a"/><path d="M0.5 3v6" stroke="#e08a40" stroke-width="0.8"/></svg>
<div class="t" style="left:103px;top:358px;font-size:11px;color:#000;font-weight:normal;"><span>Исправить</span></div>
<svg style="left:82px;top:366px" width="14" height="12" viewBox="0 0 14 12"><path d="M0.5 10.5V1.5Q0.5 0.5 1.5 0.5H6L7.8 2.5H12.5Q13.5 2.5 13.5 3.5V10.5Q13.5 11.5 12.5 11.5H1.5Q0.5 11.5 0.5 10.5Z" fill="#fff" stroke="#dcac4c"/><rect x="2" y="3" width="11" height="3" fill="#fffa90"/><rect x="2" y="6" width="11" height="1" fill="#ffd440"/><rect x="2" y="7" width="11" height="4" fill="#fdd9a8"/><path d="M13.5 3.5V10.5" stroke="#c8983a"/><path d="M0.5 3v6" stroke="#e08a40" stroke-width="0.8"/></svg>
<div class="t" style="left:103px;top:377px;font-size:11px;color:#000;font-weight:normal;"><span>Аннулировать</span></div>
<svg style="left:82px;top:385px" width="14" height="12" viewBox="0 0 14 12"><path d="M0.5 10.5V1.5Q0.5 0.5 1.5 0.5H6L7.8 2.5H12.5Q13.5 2.5 13.5 3.5V10.5Q13.5 11.5 12.5 11.5H1.5Q0.5 11.5 0.5 10.5Z" fill="#fff" stroke="#dcac4c"/><rect x="2" y="3" width="11" height="3" fill="#fffa90"/><rect x="2" y="6" width="11" height="1" fill="#ffd440"/><rect x="2" y="7" width="11" height="4" fill="#fdd9a8"/><path d="M13.5 3.5V10.5" stroke="#c8983a"/><path d="M0.5 3v6" stroke="#e08a40" stroke-width="0.8"/></svg>
<div class="t" style="left:103px;top:396px;font-size:11px;color:#000;font-weight:normal;"><span>На контроле</span></div>
<svg style="left:63px;top:404px" width="14" height="12" viewBox="0 0 14 12"><path d="M0.5 10.5V1.5Q0.5 0.5 1.5 0.5H6L7.8 2.5H12.5Q13.5 2.5 13.5 3.5V10.5Q13.5 11.5 12.5 11.5H1.5Q0.5 11.5 0.5 10.5Z" fill="#fff" stroke="#dcac4c"/><rect x="2" y="3" width="11" height="3" fill="#fffa90"/><rect x="2" y="6" width="11" height="1" fill="#ffd440"/><rect x="2" y="7" width="11" height="4" fill="#fdd9a8"/><path d="M13.5 3.5V10.5" stroke="#c8983a"/><path d="M0.5 3v6" stroke="#e08a40" stroke-width="0.8"/></svg>
<div class="t" style="left:84px;top:415px;font-size:11px;color:#000;font-weight:bold;letter-spacing:0.6px;"><span>Сопоставить (232)</span></div>
<svg style="left:63px;top:423px" width="14" height="12" viewBox="0 0 14 12"><path d="M0.5 10.5V1.5Q0.5 0.5 1.5 0.5H6L7.8 2.5H12.5Q13.5 2.5 13.5 3.5V10.5Q13.5 11.5 12.5 11.5H1.5Q0.5 11.5 0.5 10.5Z" fill="#fff" stroke="#dcac4c"/><rect x="2" y="3" width="11" height="3" fill="#fffa90"/><rect x="2" y="6" width="11" height="1" fill="#ffd440"/><rect x="2" y="7" width="11" height="4" fill="#fdd9a8"/><path d="M13.5 3.5V10.5" stroke="#c8983a"/><path d="M0.5 3v6" stroke="#e08a40" stroke-width="0.8"/></svg>
<div class="t" style="left:84px;top:434px;font-size:11px;color:#000;font-weight:bold;letter-spacing:0.6px;"><span>Ознакомиться (5)</span></div>
<svg style="left:63px;top:442px" width="14" height="12" viewBox="0 0 14 12"><path d="M0.5 10.5V1.5Q0.5 0.5 1.5 0.5H6L7.8 2.5H12.5Q13.5 2.5 13.5 3.5V10.5Q13.5 11.5 12.5 11.5H1.5Q0.5 11.5 0.5 10.5Z" fill="#fff" stroke="#dcac4c"/><rect x="2" y="3" width="11" height="3" fill="#fffa90"/><rect x="2" y="6" width="11" height="1" fill="#ffd440"/><rect x="2" y="7" width="11" height="4" fill="#fdd9a8"/><path d="M13.5 3.5V10.5" stroke="#c8983a"/><path d="M0.5 3v6" stroke="#e08a40" stroke-width="0.8"/></svg>
<div class="t" style="left:84px;top:453px;font-size:11px;color:#000;font-weight:bold;letter-spacing:0.6px;"><span>Отправить (31)</span></div>
<div class="a" style="left:39px;top:458px;width:230px;height:19px;background:#4a6cfe"></div>
<svg style="left:63px;top:461px" width="14" height="12" viewBox="0 0 14 12"><path d="M0.5 10.5V1.5Q0.5 0.5 1.5 0.5H6L7.8 2.5H12.5Q13.5 2.5 13.5 3.5V10.5Q13.5 11.5 12.5 11.5H1.5Q0.5 11.5 0.5 10.5Z" fill="#fff" stroke="#dcac4c"/><rect x="2" y="3" width="11" height="3" fill="#fffa90"/><rect x="2" y="6" width="11" height="1" fill="#ffd440"/><rect x="2" y="7" width="11" height="4" fill="#fdd9a8"/><path d="M13.5 3.5V10.5" stroke="#c8983a"/><path d="M0.5 3v6" stroke="#e08a40" stroke-width="0.8"/></svg>
<div class="t" style="left:84px;top:472px;font-size:11px;color:#fff;font-weight:bold;letter-spacing:0.6px;"><span>Распаковать (18)</span></div>
<svg style="left:63px;top:480px" width="14" height="12" viewBox="0 0 14 12"><path d="M0.5 10.5V1.5Q0.5 0.5 1.5 0.5H6L7.8 2.5H12.5Q13.5 2.5 13.5 3.5V10.5Q13.5 11.5 12.5 11.5H1.5Q0.5 11.5 0.5 10.5Z" fill="#fff" stroke="#dcac4c"/><rect x="2" y="3" width="11" height="3" fill="#fffa90"/><rect x="2" y="6" width="11" height="1" fill="#ffd440"/><rect x="2" y="7" width="11" height="4" fill="#fdd9a8"/><path d="M13.5 3.5V10.5" stroke="#c8983a"/><path d="M0.5 3v6" stroke="#e08a40" stroke-width="0.8"/></svg>
<div class="t" style="left:84px;top:491px;font-size:11px;color:#000;font-weight:normal;"><span>Ошибки</span></div>
<svg style="left:46px;top:501px" width="10" height="10" viewBox="0 0 10 10"><circle cx="4.5" cy="4.5" r="4" fill="#fff" stroke="#c8c8f0"/><path d="M2.5 4.5h4" stroke="#707060" stroke-width="1"/></svg>
<svg style="left:63px;top:499px" width="14" height="12" viewBox="0 0 14 12"><path d="M0.5 10.5V1.5Q0.5 0.5 1.5 0.5H6L7.8 2.5H12.5Q13.5 2.5 13.5 3.5V10.5Q13.5 11.5 12.5 11.5H1.5Q0.5 11.5 0.5 10.5Z" fill="#fff" stroke="#dcac4c"/><rect x="2" y="3" width="11" height="3" fill="#fffa90"/><rect x="2" y="6" width="11" height="1" fill="#ffd440"/><rect x="2" y="7" width="11" height="4" fill="#fdd9a8"/><path d="M13.5 3.5V10.5" stroke="#c8983a"/><path d="M0.5 3v6" stroke="#e08a40" stroke-width="0.8"/></svg>
<div class="t" style="left:84px;top:510px;font-size:11px;color:#000;font-weight:bold;letter-spacing:0.6px;"><span>Приглашения</span></div>
<svg style="left:82px;top:518px" width="14" height="12" viewBox="0 0 14 12"><path d="M0.5 10.5V1.5Q0.5 0.5 1.5 0.5H6L7.8 2.5H12.5Q13.5 2.5 13.5 3.5V10.5Q13.5 11.5 12.5 11.5H1.5Q0.5 11.5 0.5 10.5Z" fill="#fff" stroke="#dcac4c"/><rect x="2" y="3" width="11" height="3" fill="#fffa90"/><rect x="2" y="6" width="11" height="1" fill="#ffd440"/><rect x="2" y="7" width="11" height="4" fill="#fdd9a8"/><path d="M13.5 3.5V10.5" stroke="#c8983a"/><path d="M0.5 3v6" stroke="#e08a40" stroke-width="0.8"/></svg>
<div class="t" style="left:103px;top:529px;font-size:11px;color:#000;font-weight:normal;"><span>Требуется пригласить</span></div>
<svg style="left:82px;top:537px" width="14" height="12" viewBox="0 0 14 12"><path d="M0.5 10.5V1.5Q0.5 0.5 1.5 0.5H6L7.8 2.5H12.5Q13.5 2.5 13.5 3.5V10.5Q13.5 11.5 12.5 11.5H1.5Q0.5 11.5 0.5 10.5Z" fill="#fff" stroke="#dcac4c"/><rect x="2" y="3" width="11" height="3" fill="#fffa90"/><rect x="2" y="6" width="11" height="1" fill="#ffd440"/><rect x="2" y="7" width="11" height="4" fill="#fdd9a8"/><path d="M13.5 3.5V10.5" stroke="#c8983a"/><path d="M0.5 3v6" stroke="#e08a40" stroke-width="0.8"/></svg>
<div class="t" style="left:103px;top:548px;font-size:11px;color:#000;font-weight:normal;"><span>Ждем согласия</span></div>
<svg style="left:82px;top:556px" width="14" height="12" viewBox="0 0 14 12"><path d="M0.5 10.5V1.5Q0.5 0.5 1.5 0.5H6L7.8 2.5H12.5Q13.5 2.5 13.5 3.5V10.5Q13.5 11.5 12.5 11.5H1.5Q0.5 11.5 0.5 10.5Z" fill="#fff" stroke="#dcac4c"/><rect x="2" y="3" width="11" height="3" fill="#fffa90"/><rect x="2" y="6" width="11" height="1" fill="#ffd440"/><rect x="2" y="7" width="11" height="4" fill="#fdd9a8"/><path d="M13.5 3.5V10.5" stroke="#c8983a"/><path d="M0.5 3v6" stroke="#e08a40" stroke-width="0.8"/></svg>
<div class="t" style="left:103px;top:567px;font-size:11px;color:#000;font-weight:normal;"><span>Требуется согласие</span></div>
<svg style="left:82px;top:575px" width="14" height="12" viewBox="0 0 14 12"><path d="M0.5 10.5V1.5Q0.5 0.5 1.5 0.5H6L7.8 2.5H12.5Q13.5 2.5 13.5 3.5V10.5Q13.5 11.5 12.5 11.5H1.5Q0.5 11.5 0.5 10.5Z" fill="#fff" stroke="#dcac4c"/><rect x="2" y="3" width="11" height="3" fill="#fffa90"/><rect x="2" y="6" width="11" height="1" fill="#ffd440"/><rect x="2" y="7" width="11" height="4" fill="#fdd9a8"/><path d="M13.5 3.5V10.5" stroke="#c8983a"/><path d="M0.5 3v6" stroke="#e08a40" stroke-width="0.8"/></svg>
<div class="t" style="left:103px;top:586px;font-size:11px;color:#000;font-weight:bold;letter-spacing:0.6px;"><span>Ознакомиться (1)</span></div>
<div class="a" style="left:278px;top:130px;width:0;height:0"></div>
<svg style="left:281px;top:131px" width="16" height="16" viewBox="0 0 16 16"><rect x="0.5" y="0.5" width="6" height="7" fill="#c8f0ff" stroke="#8898f0"/><path d="M1.5 5l4-4" stroke="#4080e0" stroke-width="1.2"/><path d="M10.5 10.5V8Q10.5 4.5 7 4.5H4" stroke="#104010" stroke-width="1.5" fill="none"/><path d="M5 1.5L2 4.5 5 7.5z" fill="#104010"/><rect x="6.5" y="9.5" width="8" height="6" rx="1" fill="#80c8f8" stroke="#205890"/><path d="M7.5 10.5l3.5 2.5 3.5-2.5M8 14.5l3-2 3 2" stroke="#ffffff" stroke-width="0.8" fill="none"/><path d="M8.5 12.5h5" stroke="#205890" stroke-width="0.9"/></svg>
<div class="t" style="left:300px;top:143px;font-size:11px;color:#3c3c00;font-weight:normal;"><span>Распаковать</span></div>
<svg style="left:379px;top:133px" width="12" height="12" viewBox="0 0 12 12"><path d="M3.5 0.6h5l2.9 2.9v5l-2.9 2.9h-5L0.6 8.5v-5z" fill="#ff7050" stroke="#e42a00" stroke-width="1.2"/><path d="M3.2 4Q3.2 1.8 5.3 1.8Q7.4 1.8 7.4 4V6.3L8.6 5.6Q9.6 5.9 9.2 7L7.4 9.6Q6.6 10.4 5.3 10.4Q3.2 10.4 3.2 8z" fill="#fff"/></svg>
<div class="t" style="left:395px;top:143px;font-size:11px;color:#3c3c00;font-weight:normal;"><span>Отменить</span></div>
<div class="a" style="left:450px;top:132px;width:1px;height:15px;background:#d8d4a8"></div>
<svg style="left:458px;top:133px" width="13" height="13" viewBox="0 0 13 13"><path d="M1 11.5l1-3.5 7.5-7.5 2.5 2.5-7.5 7.5z" fill="#40b030" stroke="#207010" stroke-width="0.8"/><path d="M2 8l2.5 2.5" stroke="#a0e080"/><path d="M1 11.5l1.3-3 1.7 1.7z" fill="#f8e8c0"/></svg>
<div class="a" style="left:478px;top:132px;width:1px;height:15px;background:#d8d4a8"></div>
<svg style="left:486px;top:132px" width="16" height="16" viewBox="0 0 16 16"><path d="M9.8 10l3.6 3.6" stroke="#c08868" stroke-width="2.6" stroke-linecap="round"/><circle cx="6.4" cy="6.4" r="5" fill="#e2e8ff" stroke="#b88868" stroke-width="1.3"/><path d="M3.8 5.2q2.2-2.4 4.8-0.6" stroke="#b8d0f8" stroke-width="1.4" fill="none"/></svg>
<div class="t" style="left:504px;top:143px;font-size:11px;color:#3c3c00;font-weight:normal;"><span>Найти...</span></div>
<div class="a" style="left:548px;top:132px;width:1px;height:15px;background:#d8d4a8"></div>
<svg style="left:555px;top:132px" width="16" height="16" viewBox="0 0 16 16"><path d="M9.8 10l3.6 3.6" stroke="#d8c0b0" stroke-width="2.6" stroke-linecap="round"/><circle cx="6.4" cy="6.4" r="5" fill="#e0e0f8" stroke="#c8c0c8" stroke-width="1.3"/><path d="M2.5 2.5l8 8M10.5 2.5l-8 8" stroke="#b0b0a8" stroke-width="1.2"/></svg>
<div class="a" style="left:576px;top:132px;width:1px;height:15px;background:#d8d4a8"></div>
<svg style="left:584px;top:131px" width="15" height="15" viewBox="0 0 15 15"><path d="M5.2 2.7A4.6 4.6 0 0 1 12.2 6.8" stroke="#1a9a10" stroke-width="1.5" fill="none"/><path d="M10 7.3h5l-2.5 3.2z" fill="#107810"/><path d="M10.8 11.4A4.6 4.6 0 0 1 3.5 7.3" stroke="#1a9a10" stroke-width="1.5" fill="none"/><path d="M1 7.6h5L3.5 4.3z" fill="#107810"/></svg>
<div class="t" style="left:1071px;top:143px;font-size:11px;color:#3c3c00;font-weight:normal;"><span>Все действия</span></div>
<svg style="left:1143px;top:139px" width="6" height="3" viewBox="0 0 6 3"><path d="M0 0h6l-3 3z" fill="#4a3a00"/></svg>
<div class="a" style="left:1160px;top:130px;width:152px;height:19px;border:1px solid #b8b8a0;border-radius:3px;background:#fff"></div>
<svg style="left:1164px;top:133px" width="15" height="14" viewBox="0 0 15 14"><rect x="0.5" y="0.5" width="14" height="13" fill="#f0f4ff" stroke="#5080c0"/><rect x="0.5" y="0.5" width="14" height="2" fill="#5080c0"/><circle cx="7.5" cy="8" r="3.2" fill="#b0b8e8" stroke="#8090c8" stroke-width="1.2" stroke-dasharray="1.2 0.8"/><circle cx="7.5" cy="8" r="1.3" fill="#fff"/></svg>
<div class="t" style="left:1191px;top:143px;font-size:11px;color:#3c3c00;font-weight:normal;"><span>Настройка просмотра</span></div>
<div class="a" style="left:1320px;top:130px;width:28px;height:19px;border:1px solid #b8b8a0;border-radius:3px;background:#fff"></div>
<svg style="left:1326px;top:132px" width="16" height="16" viewBox="0 0 16 16"><defs><radialGradient id="gh" cx="0.4" cy="0.3" r="0.75"><stop offset="0" stop-color="#fff0c0"/><stop offset="0.7" stop-color="#f8b040"/><stop offset="1" stop-color="#e09020"/></radialGradient></defs><circle cx="8" cy="8" r="7.5" fill="url(#gh)" stroke="#d89030" stroke-width="0.8"/><text x="8" y="12" font-family="Liberation Sans" font-size="10" font-weight="bold" fill="#7a4a10" text-anchor="middle">?</text></svg>
<div class="a" style="left:278px;top:156px;width:1070px;height:460px;border:1px solid #b4b4a4;background:#fff"></div>
<div class="a" style="left:279px;top:177px;width:1052px;height:1px;background:#dcdcae"></div>
<div class="a" style="left:1331px;top:157px;width:1px;height:460px;background:#b4b4a4"></div>
<div class="a" style="left:1332px;top:177px;width:15px;height:1px;background:#b4b4a4"></div>
<svg style="left:1336px;top:163px" width="8" height="7" viewBox="0 0 8 7"><path d="M4 0.5L7.5 6.5H0.5z" fill="#8a8a98"/></svg>
<div class="a" style="left:439px;top:157px;width:1px;height:20px;background:#c0c0a8"></div>
<div class="a" style="left:885px;top:157px;width:1px;height:20px;background:#c0c0a8"></div>
<div class="t" style="left:284px;top:171px;font-size:11px;color:#3c3c00;font-weight:normal;"><span>Дата</span></div>
<svg style="left:420px;top:162px" width="14" height="10" viewBox="0 0 14 10"><rect x="5" y="1" width="4" height="2" fill="#d8d0a0"/><path d="M5 1h4" stroke="#f0c0a0" stroke-width="0.6"/><rect x="3" y="3.5" width="8" height="2" fill="#d4d4a4"/><path d="M3 3.5h8" stroke="#f0b8b0" stroke-width="0.6"/><rect x="1" y="6" width="12" height="3" fill="#d4d4a8"/><path d="M1 8.7h12" stroke="#f0b070" stroke-width="0.8"/></svg>
<div class="t" style="left:445px;top:171px;font-size:11px;color:#3c3c00;font-weight:normal;"><span>Контрагент</span></div>
<div class="t" style="left:891px;top:171px;font-size:11px;color:#3c3c00;font-weight:normal;"><span>Организация</span></div>
<div class="a" style="left:279px;top:196px;width:1052px;height:1px;background:#d8d8f8"></div>
<div class="a" style="left:439px;top:178px;width:1px;height:18px;background:#d8d8f8"></div>
<div class="a" style="left:885px;top:178px;width:1px;height:18px;background:#d8d8f8"></div>
<svg style="left:283px;top:181px" width="15" height="13" viewBox="0 0 15 13"><path d="M0.5 0.5h10l3.5 3.5v8h-13.5z" fill="#fff"/><path d="M0.5 11V0.5h10l3.5 3.5v4" fill="none" stroke="#b0d4f8"/><path d="M0.5 0.5v10.5" stroke="#b0d4f8"/><path d="M10.5 0.5v3.5h3.5" fill="#e0e8ff" stroke="#b8c8f8" stroke-width="0.8"/><path d="M3 2.5h5M3 4.5h5M3 6.5h7M3 8.5h2" stroke="#c0f0f8"/><path d="M1 11.5h4" stroke="#5878a0"/><path d="M7 9l2.5 2.5L14 6.5" stroke="#20a010" stroke-width="2.6" fill="none" stroke-linejoin="round"/><path d="M7.6 9.2l1.9 1.8 3.8-4" stroke="#70e040" stroke-width="1" fill="none"/></svg>
<div class="t" style="left:303px;top:192px;font-size:11px;color:#000;font-weight:normal;"><span>02.12.2022 13:05:25</span></div>
<div class="t" style="left:891px;top:192px;font-size:11px;color:#000;font-weight:normal;letter-spacing:-0.5px;"><span>Сура ООО</span></div>
<div class="a" style="left:279px;top:215px;width:1052px;height:1px;background:#d8d8f8"></div>
<div class="a" style="left:439px;top:197px;width:1px;height:18px;background:#d8d8f8"></div>
<div class="a" style="left:885px;top:197px;width:1px;height:18px;background:#d8d8f8"></div>
<svg style="left:283px;top:200px" width="15" height="13" viewBox="0 0 15 13"><path d="M0.5 0.5h10l3.5 3.5v8h-13.5z" fill="#fff"/><path d="M0.5 11V0.5h10l3.5 3.5v4" fill="none" stroke="#b0d4f8"/><path d="M0.5 0.5v10.5" stroke="#b0d4f8"/><path d="M10.5 0.5v3.5h3.5" fill="#e0e8ff" stroke="#b8c8f8" stroke-width="0.8"/><path d="M3 2.5h5M3 4.5h5M3 6.5h7M3 8.5h2" stroke="#c0f0f8"/><path d="M1 11.5h4" stroke="#5878a0"/><path d="M7 9l2.5 2.5L14 6.5" stroke="#20a010" stroke-width="2.6" fill="none" stroke-linejoin="round"/><path d="M7.6 9.2l1.9 1.8 3.8-4" stroke="#70e040" stroke-width="1" fill="none"/></svg>
<div class="t" style="left:303px;top:211px;font-size:11px;color:#000;font-weight:normal;"><span>02.12.2022 13:05:26</span></div>
<div class="t" style="left:891px;top:211px;font-size:11px;color:#000;font-weight:normal;letter-spacing:-0.5px;"><span>Сура ООО</span></div>
<div class="a" style="left:279px;top:234px;width:1052px;height:1px;background:#d8d8f8"></div>
<div class="a" style="left:439px;top:216px;width:1px;height:18px;background:#d8d8f8"></div>
<div class="a" style="left:885px;top:216px;width:1px;height:18px;background:#d8d8f8"></div>
<svg style="left:283px;top:219px" width="15" height="13" viewBox="0 0 15 13"><path d="M0.5 0.5h10l3.5 3.5v8h-13.5z" fill="#fff"/><path d="M0.5 11V0.5h10l3.5 3.5v4" fill="none" stroke="#b0d4f8"/><path d="M0.5 0.5v10.5" stroke="#b0d4f8"/><path d="M10.5 0.5v3.5h3.5" fill="#e0e8ff" stroke="#b8c8f8" stroke-width="0.8"/><path d="M3 2.5h5M3 4.5h5M3 6.5h7M3 8.5h2" stroke="#c0f0f8"/><path d="M1 11.5h4" stroke="#5878a0"/><path d="M7 9l2.5 2.5L14 6.5" stroke="#20a010" stroke-width="2.6" fill="none" stroke-linejoin="round"/><path d="M7.6 9.2l1.9 1.8 3.8-4" stroke="#70e040" stroke-width="1" fill="none"/></svg>
<div class="t" style="left:303px;top:230px;font-size:11px;color:#000;font-weight:normal;"><span>02.12.2022 13:05:26</span></div>
<div class="t" style="left:891px;top:230px;font-size:11px;color:#000;font-weight:normal;letter-spacing:-0.5px;"><span>Сура ООО</span></div>
<div class="a" style="left:279px;top:253px;width:1052px;height:1px;background:#d8d8f8"></div>
<div class="a" style="left:439px;top:235px;width:1px;height:18px;background:#d8d8f8"></div>
<div class="a" style="left:885px;top:235px;width:1px;height:18px;background:#d8d8f8"></div>
<svg style="left:283px;top:238px" width="15" height="13" viewBox="0 0 15 13"><path d="M0.5 0.5h10l3.5 3.5v8h-13.5z" fill="#fff"/><path d="M0.5 11V0.5h10l3.5 3.5v4" fill="none" stroke="#b0d4f8"/><path d="M0.5 0.5v10.5" stroke="#b0d4f8"/><path d="M10.5 0.5v3.5h3.5" fill="#e0e8ff" stroke="#b8c8f8" stroke-width="0.8"/><path d="M3 2.5h5M3 4.5h5M3 6.5h7M3 8.5h2" stroke="#c0f0f8"/><path d="M1 11.5h4" stroke="#5878a0"/><path d="M7 9l2.5 2.5L14 6.5" stroke="#20a010" stroke-width="2.6" fill="none" stroke-linejoin="round"/><path d="M7.6 9.2l1.9 1.8 3.8-4" stroke="#70e040" stroke-width="1" fill="none"/></svg>
<div class="t" style="left:303px;top:249px;font-size:11px;color:#000;font-weight:normal;"><span>02.12.2022 13:05:26</span></div>
<div class="t" style="left:891px;top:249px;font-size:11px;color:#000;font-weight:normal;letter-spacing:-0.5px;"><span>Сура ООО</span></div>
<div class="a" style="left:279px;top:272px;width:1052px;height:1px;background:#d8d8f8"></div>
<div class="a" style="left:439px;top:254px;width:1px;height:18px;background:#d8d8f8"></div>
<div class="a" style="left:885px;top:254px;width:1px;height:18px;background:#d8d8f8"></div>
<svg style="left:283px;top:257px" width="15" height="13" viewBox="0 0 15 13"><path d="M0.5 0.5h10l3.5 3.5v8h-13.5z" fill="#fff"/><path d="M0.5 11V0.5h10l3.5 3.5v4" fill="none" stroke="#b0d4f8"/><path d="M0.5 0.5v10.5" stroke="#b0d4f8"/><path d="M10.5 0.5v3.5h3.5" fill="#e0e8ff" stroke="#b8c8f8" stroke-width="0.8"/><path d="M3 2.5h5M3 4.5h5M3 6.5h7M3 8.5h2" stroke="#c0f0f8"/><path d="M1 11.5h4" stroke="#5878a0"/><path d="M7 9l2.5 2.5L14 6.5" stroke="#20a010" stroke-width="2.6" fill="none" stroke-linejoin="round"/><path d="M7.6 9.2l1.9 1.8 3.8-4" stroke="#70e040" stroke-width="1" fill="none"/></svg>
<div class="t" style="left:303px;top:268px;font-size:11px;color:#000;font-weight:normal;"><span>02.12.2022 13:05:27</span></div>
<div class="t" style="left:891px;top:268px;font-size:11px;color:#000;font-weight:normal;letter-spacing:-0.5px;"><span>Сура ООО</span></div>
<div class="a" style="left:279px;top:291px;width:1052px;height:1px;background:#d8d8f8"></div>
<div class="a" style="left:439px;top:273px;width:1px;height:18px;background:#d8d8f8"></div>
<div class="a" style="left:885px;top:273px;width:1px;height:18px;background:#d8d8f8"></div>
<svg style="left:283px;top:276px" width="15" height="13" viewBox="0 0 15 13"><path d="M0.5 0.5h10l3.5 3.5v8h-13.5z" fill="#fff"/><path d="M0.5 11V0.5h10l3.5 3.5v4" fill="none" stroke="#b0d4f8"/><path d="M0.5 0.5v10.5" stroke="#b0d4f8"/><path d="M10.5 0.5v3.5h3.5" fill="#e0e8ff" stroke="#b8c8f8" stroke-width="0.8"/><path d="M3 2.5h5M3 4.5h5M3 6.5h7M3 8.5h2" stroke="#c0f0f8"/><path d="M1 11.5h4" stroke="#5878a0"/><path d="M7 9l2.5 2.5L14 6.5" stroke="#20a010" stroke-width="2.6" fill="none" stroke-linejoin="round"/><path d="M7.6 9.2l1.9 1.8 3.8-4" stroke="#70e040" stroke-width="1" fill="none"/></svg>
<div class="t" style="left:303px;top:287px;font-size:11px;color:#000;font-weight:normal;"><span>02.12.2022 13:05:27</span></div>
<div class="t" style="left:891px;top:287px;font-size:11px;color:#000;font-weight:normal;letter-spacing:-0.5px;"><span>Сура ООО</span></div>
<div class="a" style="left:279px;top:310px;width:1052px;height:1px;background:#d8d8f8"></div>
<div class="a" style="left:439px;top:292px;width:1px;height:18px;background:#d8d8f8"></div>
<div class="a" style="left:885px;top:292px;width:1px;height:18px;background:#d8d8f8"></div>
<svg style="left:283px;top:295px" width="15" height="13" viewBox="0 0 15 13"><path d="M0.5 0.5h10l3.5 3.5v8h-13.5z" fill="#fff"/><path d="M0.5 11V0.5h10l3.5 3.5v4" fill="none" stroke="#b0d4f8"/><path d="M0.5 0.5v10.5" stroke="#b0d4f8"/><path d="M10.5 0.5v3.5h3.5" fill="#e0e8ff" stroke="#b8c8f8" stroke-width="0.8"/><path d="M3 2.5h5M3 4.5h5M3 6.5h7M3 8.5h2" stroke="#c0f0f8"/><path d="M1 11.5h4" stroke="#5878a0"/><path d="M7 9l2.5 2.5L14 6.5" stroke="#20a010" stroke-width="2.6" fill="none" stroke-linejoin="round"/><path d="M7.6 9.2l1.9 1.8 3.8-4" stroke="#70e040" stroke-width="1" fill="none"/></svg>
<div class="t" style="left:303px;top:306px;font-size:11px;color:#000;font-weight:normal;"><span>02.12.2022 13:05:27</span></div>
<div class="t" style="left:891px;top:306px;font-size:11px;color:#000;font-weight:normal;letter-spacing:-0.5px;"><span>Сура ООО</span></div>
<div class="a" style="left:279px;top:329px;width:1052px;height:1px;background:#d8d8f8"></div>
<div class="a" style="left:439px;top:311px;width:1px;height:18px;background:#d8d8f8"></div>
<div class="a" style="left:885px;top:311px;width:1px;height:18px;background:#d8d8f8"></div>
<svg style="left:283px;top:314px" width="15" height="13" viewBox="0 0 15 13"><path d="M0.5 0.5h10l3.5 3.5v8h-13.5z" fill="#fff"/><path d="M0.5 11V0.5h10l3.5 3.5v4" fill="none" stroke="#b0d4f8"/><path d="M0.5 0.5v10.5" stroke="#b0d4f8"/><path d="M10.5 0.5v3.5h3.5" fill="#e0e8ff" stroke="#b8c8f8" stroke-width="0.8"/><path d="M3 2.5h5M3 4.5h5M3 6.5h7M3 8.5h2" stroke="#c0f0f8"/><path d="M1 11.5h4" stroke="#5878a0"/><path d="M7 9l2.5 2.5L14 6.5" stroke="#20a010" stroke-width="2.6" fill="none" stroke-linejoin="round"/><path d="M7.6 9.2l1.9 1.8 3.8-4" stroke="#70e040" stroke-width="1" fill="none"/></svg>
<div class="t" style="left:303px;top:325px;font-size:11px;color:#000;font-weight:normal;"><span>02.12.2022 13:05:27</span></div>
<div class="t" style="left:891px;top:325px;font-size:11px;color:#000;font-weight:normal;letter-spacing:-0.5px;"><span>Сура ООО</span></div>
<div class="a" style="left:279px;top:348px;width:1052px;height:1px;background:#d8d8f8"></div>
<div class="a" style="left:439px;top:330px;width:1px;height:18px;background:#d8d8f8"></div>
<div class="a" style="left:885px;top:330px;width:1px;height:18px;background:#d8d8f8"></div>
<svg style="left:283px;top:333px" width="15" height="13" viewBox="0 0 15 13"><path d="M0.5 0.5h10l3.5 3.5v8h-13.5z" fill="#fff"/><path d="M0.5 11V0.5h10l3.5 3.5v4" fill="none" stroke="#b0d4f8"/><path d="M0.5 0.5v10.5" stroke="#b0d4f8"/><path d="M10.5 0.5v3.5h3.5" fill="#e0e8ff" stroke="#b8c8f8" stroke-width="0.8"/><path d="M3 2.5h5M3 4.5h5M3 6.5h7M3 8.5h2" stroke="#c0f0f8"/><path d="M1 11.5h4" stroke="#5878a0"/><path d="M7 9l2.5 2.5L14 6.5" stroke="#20a010" stroke-width="2.6" fill="none" stroke-linejoin="round"/><path d="M7.6 9.2l1.9 1.8 3.8-4" stroke="#70e040" stroke-width="1" fill="none"/></svg>
<div class="t" style="left:303px;top:344px;font-size:11px;color:#000;font-weight:normal;"><span>02.12.2022 13:05:27</span></div>
<div class="t" style="left:891px;top:344px;font-size:11px;color:#000;font-weight:normal;letter-spacing:-0.5px;"><span>Сура ООО</span></div>
<div class="a" style="left:279px;top:367px;width:1052px;height:1px;background:#d8d8f8"></div>
<div class="a" style="left:439px;top:349px;width:1px;height:18px;background:#d8d8f8"></div>
<div class="a" style="left:885px;top:349px;width:1px;height:18px;background:#d8d8f8"></div>
<svg style="left:283px;top:352px" width="15" height="13" viewBox="0 0 15 13"><path d="M0.5 0.5h10l3.5 3.5v8h-13.5z" fill="#fff"/><path d="M0.5 11V0.5h10l3.5 3.5v4" fill="none" stroke="#b0d4f8"/><path d="M0.5 0.5v10.5" stroke="#b0d4f8"/><path d="M10.5 0.5v3.5h3.5" fill="#e0e8ff" stroke="#b8c8f8" stroke-width="0.8"/><path d="M3 2.5h5M3 4.5h5M3 6.5h7M3 8.5h2" stroke="#c0f0f8"/><path d="M1 11.5h4" stroke="#5878a0"/><path d="M7 9l2.5 2.5L14 6.5" stroke="#20a010" stroke-width="2.6" fill="none" stroke-linejoin="round"/><path d="M7.6 9.2l1.9 1.8 3.8-4" stroke="#70e040" stroke-width="1" fill="none"/></svg>
<div class="t" style="left:303px;top:363px;font-size:11px;color:#000;font-weight:normal;"><span>02.12.2022 13:05:27</span></div>
<div class="t" style="left:891px;top:363px;font-size:11px;color:#000;font-weight:normal;letter-spacing:-0.5px;"><span>Сура ООО</span></div>
<div class="a" style="left:279px;top:386px;width:1052px;height:1px;background:#d8d8f8"></div>
<div class="a" style="left:439px;top:368px;width:1px;height:18px;background:#d8d8f8"></div>
<div class="a" style="left:885px;top:368px;width:1px;height:18px;background:#d8d8f8"></div>
<svg style="left:283px;top:371px" width="15" height="13" viewBox="0 0 15 13"><path d="M0.5 0.5h10l3.5 3.5v8h-13.5z" fill="#fff"/><path d="M0.5 11V0.5h10l3.5 3.5v4" fill="none" stroke="#b0d4f8"/><path d="M0.5 0.5v10.5" stroke="#b0d4f8"/><path d="M10.5 0.5v3.5h3.5" fill="#e0e8ff" stroke="#b8c8f8" stroke-width="0.8"/><path d="M3 2.5h5M3 4.5h5M3 6.5h7M3 8.5h2" stroke="#c0f0f8"/><path d="M1 11.5h4" stroke="#5878a0"/><path d="M7 9l2.5 2.5L14 6.5" stroke="#20a010" stroke-width="2.6" fill="none" stroke-linejoin="round"/><path d="M7.6 9.2l1.9 1.8 3.8-4" stroke="#70e040" stroke-width="1" fill="none"/></svg>
<div class="t" style="left:303px;top:382px;font-size:11px;color:#000;font-weight:normal;"><span>02.12.2022 13:05:27</span></div>
<div class="t" style="left:891px;top:382px;font-size:11px;color:#000;font-weight:normal;letter-spacing:-0.5px;"><span>Сура ООО</span></div>
<div class="a" style="left:279px;top:405px;width:1052px;height:1px;background:#d8d8f8"></div>
<div class="a" style="left:439px;top:387px;width:1px;height:18px;background:#d8d8f8"></div>
<div class="a" style="left:885px;top:387px;width:1px;height:18px;background:#d8d8f8"></div>
<svg style="left:283px;top:390px" width="15" height="13" viewBox="0 0 15 13"><path d="M0.5 0.5h10l3.5 3.5v8h-13.5z" fill="#fff"/><path d="M0.5 11V0.5h10l3.5 3.5v4" fill="none" stroke="#b0d4f8"/><path d="M0.5 0.5v10.5" stroke="#b0d4f8"/><path d="M10.5 0.5v3.5h3.5" fill="#e0e8ff" stroke="#b8c8f8" stroke-width="0.8"/><path d="M3 2.5h5M3 4.5h5M3 6.5h7M3 8.5h2" stroke="#c0f0f8"/><path d="M1 11.5h4" stroke="#5878a0"/><path d="M7 9l2.5 2.5L14 6.5" stroke="#20a010" stroke-width="2.6" fill="none" stroke-linejoin="round"/><path d="M7.6 9.2l1.9 1.8 3.8-4" stroke="#70e040" stroke-width="1" fill="none"/></svg>
<div class="t" style="left:303px;top:401px;font-size:11px;color:#000;font-weight:normal;"><span>02.12.2022 13:05:27</span></div>
<div class="t" style="left:891px;top:401px;font-size:11px;color:#000;font-weight:normal;letter-spacing:-0.5px;"><span>Сура ООО</span></div>
<div class="a" style="left:279px;top:424px;width:1052px;height:1px;background:#d8d8f8"></div>
<div class="a" style="left:439px;top:406px;width:1px;height:18px;background:#d8d8f8"></div>
<div class="a" style="left:885px;top:406px;width:1px;height:18px;background:#d8d8f8"></div>
<svg style="left:283px;top:409px" width="15" height="13" viewBox="0 0 15 13"><path d="M0.5 0.5h10l3.5 3.5v8h-13.5z" fill="#fff"/><path d="M0.5 11V0.5h10l3.5 3.5v4" fill="none" stroke="#b0d4f8"/><path d="M0.5 0.5v10.5" stroke="#b0d4f8"/><path d="M10.5 0.5v3.5h3.5" fill="#e0e8ff" stroke="#b8c8f8" stroke-width="0.8"/><path d="M3 2.5h5M3 4.5h5M3 6.5h7M3 8.5h2" stroke="#c0f0f8"/><path d="M1 11.5h4" stroke="#5878a0"/><path d="M7 9l2.5 2.5L14 6.5" stroke="#20a010" stroke-width="2.6" fill="none" stroke-linejoin="round"/><path d="M7.6 9.2l1.9 1.8 3.8-4" stroke="#70e040" stroke-width="1" fill="none"/></svg>
<div class="t" style="left:303px;top:420px;font-size:11px;color:#000;font-weight:normal;"><span>02.12.2022 13:05:27</span></div>
<div class="t" style="left:891px;top:420px;font-size:11px;color:#000;font-weight:normal;letter-spacing:-0.5px;"><span>Сура ООО</span></div>
<div class="a" style="left:279px;top:443px;width:1052px;height:1px;background:#d8d8f8"></div>
<div class="a" style="left:439px;top:425px;width:1px;height:18px;background:#d8d8f8"></div>
<div class="a" style="left:885px;top:425px;width:1px;height:18px;background:#d8d8f8"></div>
<svg style="left:283px;top:428px" width="15" height="13" viewBox="0 0 15 13"><path d="M0.5 0.5h10l3.5 3.5v8h-13.5z" fill="#fff"/><path d="M0.5 11V0.5h10l3.5 3.5v4" fill="none" stroke="#b0d4f8"/><path d="M0.5 0.5v10.5" stroke="#b0d4f8"/><path d="M10.5 0.5v3.5h3.5" fill="#e0e8ff" stroke="#b8c8f8" stroke-width="0.8"/><path d="M3 2.5h5M3 4.5h5M3 6.5h7M3 8.5h2" stroke="#c0f0f8"/><path d="M1 11.5h4" stroke="#5878a0"/><path d="M7 9l2.5 2.5L14 6.5" stroke="#20a010" stroke-width="2.6" fill="none" stroke-linejoin="round"/><path d="M7.6 9.2l1.9 1.8 3.8-4" stroke="#70e040" stroke-width="1" fill="none"/></svg>
<div class="t" style="left:303px;top:439px;font-size:11px;color:#000;font-weight:normal;"><span>02.12.2022 13:05:28</span></div>
<div class="t" style="left:891px;top:439px;font-size:11px;color:#000;font-weight:normal;letter-spacing:-0.5px;"><span>Сура ООО</span></div>
<div class="a" style="left:279px;top:462px;width:1052px;height:1px;background:#d8d8f8"></div>
<div class="a" style="left:439px;top:444px;width:1px;height:18px;background:#d8d8f8"></div>
<div class="a" style="left:885px;top:444px;width:1px;height:18px;background:#d8d8f8"></div>
<svg style="left:283px;top:447px" width="15" height="13" viewBox="0 0 15 13"><path d="M0.5 0.5h10l3.5 3.5v8h-13.5z" fill="#fff"/><path d="M0.5 11V0.5h10l3.5 3.5v4" fill="none" stroke="#b0d4f8"/><path d="M0.5 0.5v10.5" stroke="#b0d4f8"/><path d="M10.5 0.5v3.5h3.5" fill="#e0e8ff" stroke="#b8c8f8" stroke-width="0.8"/><path d="M3 2.5h5M3 4.5h5M3 6.5h7M3 8.5h2" stroke="#c0f0f8"/><path d="M1 11.5h4" stroke="#5878a0"/><path d="M7 9l2.5 2.5L14 6.5" stroke="#20a010" stroke-width="2.6" fill="none" stroke-linejoin="round"/><path d="M7.6 9.2l1.9 1.8 3.8-4" stroke="#70e040" stroke-width="1" fill="none"/></svg>
<div class="t" style="left:303px;top:458px;font-size:11px;color:#000;font-weight:normal;"><span>02.12.2022 13:05:28</span></div>
<div class="t" style="left:891px;top:458px;font-size:11px;color:#000;font-weight:normal;letter-spacing:-0.5px;"><span>Сура ООО</span></div>
<div class="a" style="left:279px;top:481px;width:1052px;height:1px;background:#d8d8f8"></div>
<div class="a" style="left:439px;top:463px;width:1px;height:18px;background:#d8d8f8"></div>
<div class="a" style="left:885px;top:463px;width:1px;height:18px;background:#d8d8f8"></div>
<svg style="left:283px;top:466px" width="15" height="13" viewBox="0 0 15 13"><path d="M0.5 0.5h10l3.5 3.5v8h-13.5z" fill="#fff"/><path d="M0.5 11V0.5h10l3.5 3.5v4" fill="none" stroke="#b0d4f8"/><path d="M0.5 0.5v10.5" stroke="#b0d4f8"/><path d="M10.5 0.5v3.5h3.5" fill="#e0e8ff" stroke="#b8c8f8" stroke-width="0.8"/><path d="M3 2.5h5M3 4.5h5M3 6.5h7M3 8.5h2" stroke="#c0f0f8"/><path d="M1 11.5h4" stroke="#5878a0"/><path d="M7 9l2.5 2.5L14 6.5" stroke="#20a010" stroke-width="2.6" fill="none" stroke-linejoin="round"/><path d="M7.6 9.2l1.9 1.8 3.8-4" stroke="#70e040" stroke-width="1" fill="none"/></svg>
<div class="t" style="left:303px;top:477px;font-size:11px;color:#000;font-weight:normal;"><span>02.12.2022 13:05:28</span></div>
<div class="t" style="left:891px;top:477px;font-size:11px;color:#000;font-weight:normal;letter-spacing:-0.5px;"><span>Сура ООО</span></div>
<div class="a" style="left:279px;top:500px;width:1052px;height:1px;background:#d8d8f8"></div>
<div class="a" style="left:439px;top:482px;width:1px;height:18px;background:#d8d8f8"></div>
<div class="a" style="left:885px;top:482px;width:1px;height:18px;background:#d8d8f8"></div>
<svg style="left:283px;top:485px" width="15" height="13" viewBox="0 0 15 13"><path d="M0.5 0.5h10l3.5 3.5v8h-13.5z" fill="#fff"/><path d="M0.5 11V0.5h10l3.5 3.5v4" fill="none" stroke="#b0d4f8"/><path d="M0.5 0.5v10.5" stroke="#b0d4f8"/><path d="M10.5 0.5v3.5h3.5" fill="#e0e8ff" stroke="#b8c8f8" stroke-width="0.8"/><path d="M3 2.5h5M3 4.5h5M3 6.5h7M3 8.5h2" stroke="#c0f0f8"/><path d="M1 11.5h4" stroke="#5878a0"/><path d="M7 9l2.5 2.5L14 6.5" stroke="#20a010" stroke-width="2.6" fill="none" stroke-linejoin="round"/><path d="M7.6 9.2l1.9 1.8 3.8-4" stroke="#70e040" stroke-width="1" fill="none"/></svg>
<div class="t" style="left:303px;top:496px;font-size:11px;color:#000;font-weight:normal;"><span>02.12.2022 13:05:28</span></div>
<div class="t" style="left:891px;top:496px;font-size:11px;color:#000;font-weight:normal;letter-spacing:-0.5px;"><span>Сура ООО</span></div>
<div class="a" style="left:279px;top:500px;width:160px;height:20px;background:#6a8efe;border-top:1px solid #a4c0ff;border-bottom:1px solid #a4c0ff"></div>
<div class="a" style="left:439px;top:500px;width:892px;height:20px;background:#d8fefe;border-top:1px solid #b4d4fa;border-bottom:1px solid #b4d4fa"></div>
<svg style="left:283px;top:504px" width="15" height="13" viewBox="0 0 15 13"><path d="M0.5 0.5h10l3.5 3.5v8h-13.5z" fill="#fff"/><path d="M0.5 11V0.5h10l3.5 3.5v8" fill="none" stroke="#f0f8ff"/><path d="M0.5 0.5v10.5" stroke="#e0f0ff"/><path d="M10.5 0.5v3.5h3.5" fill="#d8e8ff" stroke="#e0f0ff" stroke-width="0.8"/><path d="M3 2.5h5M3 4.5h5M3 6.5h7M3 8.5h2" stroke="#c0f0f8"/><path d="M1 11.5h4" stroke="#4868a0"/><path d="M7 9l2.5 2.5L14 6.5" stroke="#20a010" stroke-width="2.6" fill="none" stroke-linejoin="round"/><path d="M7.6 9.2l1.9 1.8 3.8-4" stroke="#70e040" stroke-width="1" fill="none"/></svg>
<div class="t" style="left:303px;top:515px;font-size:11px;color:#fff;font-weight:normal;"><span>02.12.2022 13:05:28</span></div>
<div class="t" style="left:891px;top:515px;font-size:11px;color:#000;font-weight:normal;letter-spacing:-0.5px;"><span>Сура ООО</span></div>
<div class="a" style="left:1331px;top:387px;width:17px;height:16px;border:1px solid #b4b4a4;background:#fff"></div>
<div class="a" style="left:1345px;top:388px;width:2px;height:14px;background:#ffd8a0"></div>
<svg style="left:1336px;top:391px" width="8" height="8" viewBox="0 0 8 8"><path d="M1 2q2-2 5 0.5l-1.5 0.5q-2 1-2 3.5q-1.5-2-1.5-4.5z" fill="#c8c8a0"/><circle cx="1.5" cy="3" r="0.8" fill="#f0a0d0"/></svg>
<svg style="left:0px;top:0px" width="400" height="170" viewBox="0 0 400 170"><path d="M272.5 119.5 Q280 120.5 300 121 L340 120.2 L367 120.2 Q371.8 120.2 371.8 125 L371.8 149.5 Q371.8 152.6 367 152.9 L322 156 L283 156 Q275.5 155.8 275 150 L273.5 128 Z" fill="none" stroke="#e2191d" stroke-width="5" stroke-linejoin="round"/><circle cx="272.6" cy="119.2" r="2.6" fill="#e2191d"/></svg>
</body></html>
